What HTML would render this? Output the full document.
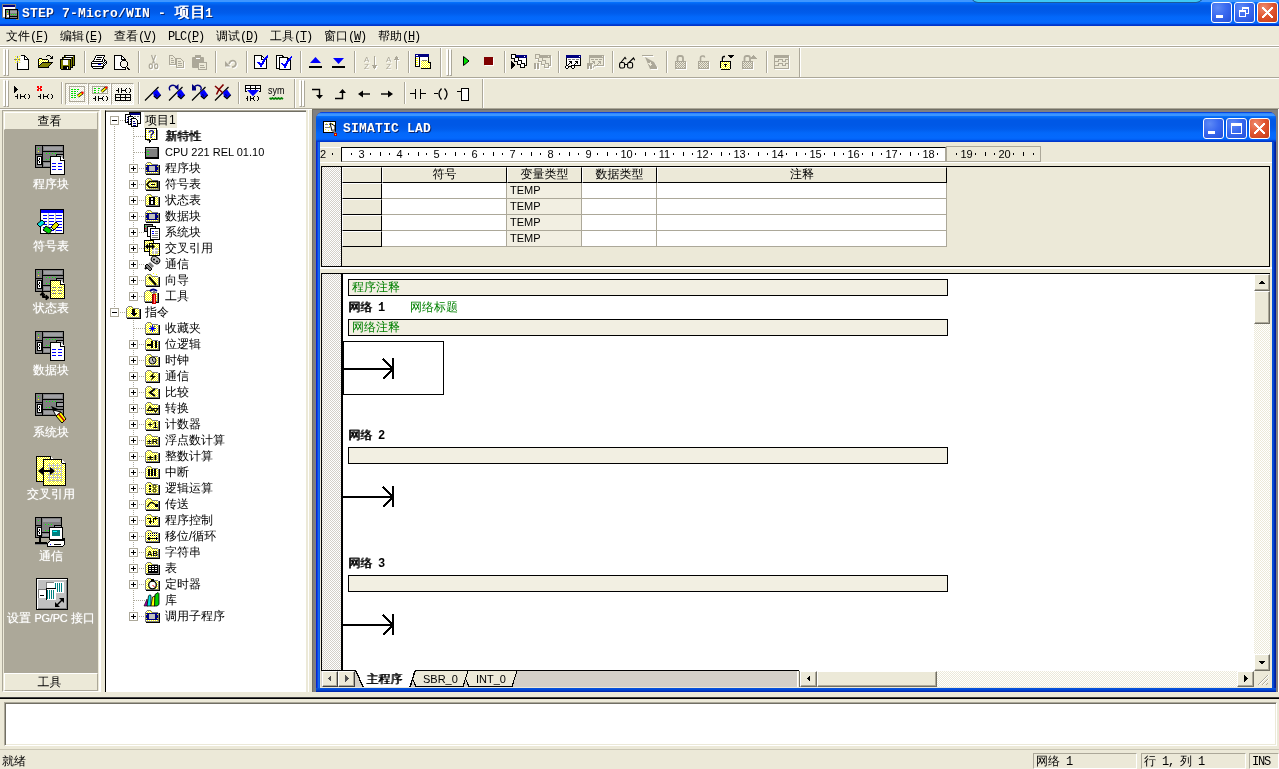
<!DOCTYPE html><html lang="zh-CN"><head><meta charset="utf-8"><title>STEP 7-Micro/WIN - 项目1</title><style>
*{box-sizing:border-box}
html,body{margin:0;padding:0}
body{width:1279px;height:769px;background:#ece9d8;position:relative;overflow:hidden;
 font:12px "Liberation Sans","WenQuanYi Zen Hei","Noto Sans CJK SC",sans-serif;color:#000;line-height:14px;will-change:transform}
.a{position:absolute}
.m{font-family:"Liberation Mono","WenQuanYi Zen Hei",monospace;font-size:12px;letter-spacing:-1.2px}
.c{font-family:"Liberation Sans","WenQuanYi Zen Hei","Noto Sans CJK SC",sans-serif;font-size:12px}
svg{position:absolute;overflow:visible}
.tb{background:linear-gradient(#3e96ff 0,#3e96ff 1.5px,#0470fc 2.5px,#0363ee 4px,#0058e6 6px,#0058e6 9px,#015ceb 13px,#0368fa 17px,#0469fd 22px,#0160f5 23.5px,#0040d5 24.5px,#002fc4 26px)}
.wb{position:absolute;width:21px;height:21px;border:1px solid #fff;border-radius:3px;
 background:radial-gradient(circle at 30% 25%,#5e8af5 0,#3a6af0 45%,#2450d8 100%)}
.wb.x{background:radial-gradient(circle at 30% 25%,#ee8d70 0,#e0542e 50%,#c23a14 100%)}
.grip{position:absolute;width:3px;border-left:1px solid #fff;border-top:1px solid #fff;border-right:1px solid #aca899;border-bottom:1px solid #aca899;background:#fff}
.sep{position:absolute;width:2px;border-left:1px solid #aca899;border-right:1px solid #fff}
.btn{position:absolute;background:#ece9d8;border:1px solid;border-color:#fff #716f64 #716f64 #fff;box-shadow:inset -1px -1px 0 #aca899}
.hatch{background-image:conic-gradient(#fff 25%,#ece9d8 0 50%,#fff 0 75%,#ece9d8 0);background-size:2px 2px}
.hatchg{background-image:conic-gradient(#fff 25%,#d4d0c8 0 50%,#fff 0 75%,#d4d0c8 0);background-size:2px 2px}
.navl{position:absolute;left:4px;width:94px;text-align:center;color:#fff;text-shadow:0 0 1px rgba(255,255,255,.7);font-size:12px;height:14px;line-height:14px;white-space:nowrap}
.tl{position:absolute;height:16px;line-height:16px;white-space:nowrap;font-size:12px}
.pm{position:absolute;width:9px;height:9px;border:1px solid #aca899;background:#fff}
.pm:before{content:"";position:absolute;left:1px;top:3px;width:5px;height:1px;background:#000}
.pm.p:after{content:"";position:absolute;left:3px;top:1px;width:1px;height:5px;background:#000}
.dh{position:absolute;height:1px;background-image:linear-gradient(90deg,#aca899 50%,transparent 0);background-size:2px 1px}
.dv{position:absolute;width:1px;background-image:linear-gradient(#aca899 50%,transparent 0);background-size:1px 2px}
.hc{position:absolute;height:16px;background:#ece9d8;border-right:1px solid #000;border-bottom:1px solid #000;border-left:1px solid #fff;border-top:1px solid #fff;text-align:center;line-height:13px;font-size:12px}
.gc{position:absolute;height:16px;border-right:1px solid #aca899;border-bottom:1px solid #aca899;background:#fff;font-size:11px;line-height:15px;padding-left:3px}
.cm{position:absolute;left:348px;width:600px;height:17px;border:1px solid #000;background:#f2efe2;color:#008000;font-size:12px;line-height:14px;padding-left:3px}
.nw{position:absolute;left:348px;text-shadow:1px 0 0 #000;font-size:12px;line-height:14px;white-space:nowrap}
.sb{position:absolute;background:#ece9d8;border:1px solid;border-color:#fff #716f64 #716f64 #fff;box-shadow:inset -1px -1px 0 #aca899}
.sp{position:absolute;top:753px;height:16px;border:1px solid;border-color:#aca899 #fff #fff #aca899;font-size:12px;line-height:14px;padding-left:2px;white-space:nowrap}
</style></head><body>
<div class="a tb" style="left:0;top:0;width:1279px;height:26px"></div>
<div class="a" style="left:971px;top:-4px;width:232px;height:7px;background:#3ec8f4;border:1px solid #1a5a9a;border-radius:0 0 8px 8px"></div>
<svg style="left:2px;top:4px" width="17" height="16" viewBox="0 0 17 16" shape-rendering="crispEdges" ><rect x="0" y="0" width="14" height="14" fill="#808080"/><rect x="1" y="1" width="12" height="2" fill="#000080"/><rect x="1" y="3" width="12" height="10" fill="#fff"/><rect x="3" y="5" width="13" height="10" fill="#000"/><rect x="4" y="6" width="11" height="8" fill="#808080"/><rect x="7" y="6" width="1" height="8" fill="#000"/><rect x="5" y="7" width="1" height="1" fill="#0f0"/><rect x="5" y="9" width="1" height="1" fill="#ff0"/><rect x="5" y="11" width="2" height="2" fill="#fff"/><rect x="8" y="7" width="7" height="2" fill="#a0a0a4"/><rect x="9" y="10" width="1" height="1" fill="#0f0"/><rect x="11" y="10" width="1" height="1" fill="#0f0"/><rect x="13" y="10" width="1" height="1" fill="#0f0"/><rect x="8" y="12" width="7" height="1" fill="#000"/><rect x="14" y="15" width="3" height="1" fill="#808080"/><rect x="16" y="7" width="1" height="9" fill="#808080"/></svg>
<div class="a" style="left:22px;top:6px;color:#fff;font:bold 13px 'Liberation Mono','WenQuanYi Zen Hei',monospace;letter-spacing:.2px;line-height:16px;white-space:nowrap;text-shadow:1px 1px 0 #0a246a">STEP 7-Micro/WIN -</div>
<div class="a" style="left:174px;top:4px;color:#fff;font:15px 'Liberation Sans','WenQuanYi Zen Hei',sans-serif;line-height:16px;letter-spacing:1px;white-space:nowrap;text-shadow:1px 0 0 #fff,2px 1px 0 #0a246a">项目</div>
<div class="a" style="left:205px;top:6px;color:#fff;font:bold 13px 'Liberation Mono','WenQuanYi Zen Hei',monospace;letter-spacing:.2px;line-height:16px;white-space:nowrap;text-shadow:1px 1px 0 #0a246a">1</div>
<div class="wb" style="left:1211px;top:2px"><svg style="left:4px;top:12px" width="7" height="3" viewBox="0 0 7 3" shape-rendering="crispEdges" ><rect x="0" y="0" width="7" height="3" fill="#fff"/></svg></div>
<div class="wb" style="left:1234px;top:2px"><svg style="left:4px;top:4px" width="12" height="11" viewBox="0 0 12 11" shape-rendering="crispEdges" ><path d="M3.5 3V.5h6v6H7" fill="none" stroke="#fff" stroke-width="1"/><rect x="3" y="0" width="7" height="2" fill="#fff"/><rect x=".5" y="3.5" width="6" height="6" fill="none" stroke="#fff"/><rect x="0" y="3" width="7" height="2" fill="#fff"/></svg></div>
<div class="wb x" style="left:1257px;top:2px"><svg style="left:4px;top:4px" width="11" height="11" viewBox="0 0 11 11" shape-rendering="crispEdges" shape-rendering="geometricPrecision"><path d="M1 1l9 9M10 1l-9 9" stroke="#fff" stroke-width="2.2" stroke-linecap="square"/></svg></div>
<div class="a" style="left:6px;top:29px;white-space:nowrap">文件<span class="m">(<u>F</u>)</span></div>
<div class="a" style="left:60px;top:29px;white-space:nowrap">编辑<span class="m">(<u>E</u>)</span></div>
<div class="a" style="left:114px;top:29px;white-space:nowrap">查看<span class="m">(<u>V</u>)</span></div>
<div class="a" style="left:168px;top:29px;white-space:nowrap"><span class="m">PLC(<u>P</u>)</span></div>
<div class="a" style="left:216px;top:29px;white-space:nowrap">调试<span class="m">(<u>D</u>)</span></div>
<div class="a" style="left:270px;top:29px;white-space:nowrap">工具<span class="m">(<u>T</u>)</span></div>
<div class="a" style="left:324px;top:29px;white-space:nowrap">窗口<span class="m">(<u>W</u>)</span></div>
<div class="a" style="left:378px;top:29px;white-space:nowrap">帮助<span class="m">(<u>H</u>)</span></div>
<div class="a" style="left:0;top:45px;width:1279px;height:3px;background:#fff;border-top:0"></div><div class="a" style="left:0;top:46px;width:1279px;height:1px;background:#aca899"></div>
<div class="a" style="left:0;top:77px;width:1279px;height:2px;border-top:1px solid #aca899;border-bottom:1px solid #fff"></div><div class="a" style="left:0;top:108px;width:1279px;height:2px;background:#fff;border-top:1px solid #aca899"></div><div class="grip" style="left:3px;top:49px;height:27px"></div><div class="grip" style="left:6px;top:49px;height:27px"></div><div class="grip" style="left:446px;top:49px;height:27px"></div><div class="grip" style="left:449px;top:49px;height:27px"></div><div class="sep" style="left:84px;top:51px;height:22px"></div><div class="sep" style="left:138px;top:51px;height:22px"></div><div class="sep" style="left:215px;top:51px;height:22px"></div><div class="sep" style="left:246px;top:51px;height:22px"></div><div class="sep" style="left:300px;top:51px;height:22px"></div><div class="sep" style="left:354px;top:51px;height:22px"></div><div class="sep" style="left:408px;top:51px;height:22px"></div><div class="sep" style="left:504px;top:51px;height:22px"></div><div class="sep" style="left:558px;top:51px;height:22px"></div><div class="sep" style="left:612px;top:51px;height:22px"></div><div class="sep" style="left:666px;top:51px;height:22px"></div><div class="sep" style="left:766px;top:51px;height:22px"></div><div class="sep" style="left:440px;top:48px;height:29px"></div><div class="sep" style="left:799px;top:48px;height:29px"></div><div class="grip" style="left:3px;top:80px;height:27px"></div><div class="grip" style="left:6px;top:80px;height:27px"></div><div class="grip" style="left:299px;top:80px;height:27px"></div><div class="grip" style="left:302px;top:80px;height:27px"></div><div class="sep" style="left:61px;top:82px;height:22px"></div><div class="sep" style="left:138px;top:82px;height:22px"></div><div class="sep" style="left:238px;top:82px;height:22px"></div><div class="sep" style="left:404px;top:82px;height:22px"></div><div class="sep" style="left:294px;top:79px;height:29px"></div><div class="sep" style="left:482px;top:79px;height:29px"></div><div class="a hatch" style="left:65px;top:83px;width:23px;height:22px;border:1px solid;border-color:#aca899 #fff #fff #aca899"></div><div class="a hatch" style="left:88px;top:83px;width:23px;height:22px;border:1px solid;border-color:#aca899 #fff #fff #aca899"></div><div class="a hatch" style="left:111px;top:83px;width:23px;height:22px;border:1px solid;border-color:#aca899 #fff #fff #aca899"></div><svg width="0" height="0" style="left:0;top:0"><defs><pattern id="ydot" width="2" height="2" patternUnits="userSpaceOnUse"><rect width="2" height="2" fill="#ffff00"/><rect width="1" height="1" fill="#fff"/><rect x="1" y="1" width="1" height="1" fill="#fff"/></pattern><pattern id="gdot" width="2" height="2" patternUnits="userSpaceOnUse"><rect width="2" height="2" fill="#aca899"/><rect width="1" height="1" fill="#ece9d8"/><rect x="1" y="1" width="1" height="1" fill="#ece9d8"/></pattern><pattern id="ydot2" width="2" height="2" patternUnits="userSpaceOnUse"><rect width="2" height="2" fill="#fff"/><rect width="1" height="1" fill="#ffff00"/></pattern><pattern id="hdot" width="2" height="2" patternUnits="userSpaceOnUse"><rect width="2" height="2" fill="#ece9d8"/><rect width="1" height="1" fill="#fff"/><rect x="1" y="1" width="1" height="1" fill="#fff"/></pattern></defs></svg><svg style="left:14px;top:55px" width="16" height="16" viewBox="0 0 16 16" shape-rendering="crispEdges" ><rect x="7" y="0" width="4" height="1" fill="#000"/><rect x="1" y="1" width="1" height="1" fill="#ffff00"/><rect x="3" y="1" width="1" height="1" fill="#808080"/><rect x="5" y="1" width="1" height="1" fill="#ffff00"/><rect x="7" y="1" width="3" height="1" fill="#fff"/><rect x="10" y="1" width="2" height="1" fill="#000"/><rect x="3" y="2" width="1" height="1" fill="#808080"/><rect x="6" y="2" width="4" height="1" fill="#fff"/><rect x="10" y="2" width="1" height="1" fill="#000"/><rect x="11" y="2" width="1" height="1" fill="#fff"/><rect x="12" y="2" width="1" height="1" fill="#000"/><rect x="1" y="3" width="1" height="1" fill="#ffff00"/><rect x="3" y="3" width="1" height="1" fill="#ffff00"/><rect x="5" y="3" width="1" height="1" fill="#ffff00"/><rect x="7" y="3" width="3" height="1" fill="#fff"/><rect x="10" y="3" width="1" height="1" fill="#000"/><rect x="11" y="3" width="2" height="1" fill="#fff"/><rect x="13" y="3" width="1" height="1" fill="#000"/><rect x="0" y="4" width="3" height="1" fill="#808080"/><rect x="3" y="4" width="1" height="1" fill="#ffff00"/><rect x="4" y="4" width="2" height="1" fill="#808080"/><rect x="6" y="4" width="4" height="1" fill="#fff"/><rect x="10" y="4" width="5" height="1" fill="#000"/><rect x="1" y="5" width="1" height="1" fill="#ffff00"/><rect x="3" y="5" width="1" height="1" fill="#ffff00"/><rect x="5" y="5" width="1" height="1" fill="#ffff00"/><rect x="7" y="5" width="7" height="1" fill="#fff"/><rect x="14" y="5" width="1" height="1" fill="#000"/><rect x="3" y="6" width="1" height="1" fill="#808080"/><rect x="6" y="6" width="8" height="1" fill="#fff"/><rect x="14" y="6" width="1" height="1" fill="#000"/><rect x="1" y="7" width="1" height="1" fill="#ffff00"/><rect x="3" y="7" width="1" height="1" fill="#808080"/><rect x="5" y="7" width="1" height="1" fill="#ffff00"/><rect x="7" y="7" width="7" height="1" fill="#fff"/><rect x="14" y="7" width="1" height="1" fill="#000"/><rect x="3" y="8" width="1" height="1" fill="#000"/><rect x="4" y="8" width="10" height="1" fill="#fff"/><rect x="14" y="8" width="1" height="1" fill="#000"/><rect x="3" y="9" width="1" height="1" fill="#000"/><rect x="4" y="9" width="10" height="1" fill="#fff"/><rect x="14" y="9" width="1" height="1" fill="#000"/><rect x="3" y="10" width="1" height="1" fill="#000"/><rect x="4" y="10" width="10" height="1" fill="#fff"/><rect x="14" y="10" width="1" height="1" fill="#000"/><rect x="3" y="11" width="1" height="1" fill="#000"/><rect x="4" y="11" width="10" height="1" fill="#fff"/><rect x="14" y="11" width="1" height="1" fill="#000"/><rect x="3" y="12" width="1" height="1" fill="#000"/><rect x="4" y="12" width="10" height="1" fill="#fff"/><rect x="14" y="12" width="1" height="1" fill="#000"/><rect x="3" y="13" width="1" height="1" fill="#000"/><rect x="4" y="13" width="10" height="1" fill="#fff"/><rect x="14" y="13" width="1" height="1" fill="#000"/><rect x="3" y="14" width="12" height="1" fill="#000"/></svg><svg style="left:37px;top:55px" width="16" height="16" viewBox="0 0 16 16" shape-rendering="crispEdges" ><rect x="10" y="0" width="3" height="1" fill="#000"/><rect x="9" y="1" width="1" height="1" fill="#000"/><rect x="13" y="1" width="1" height="1" fill="#000"/><rect x="15" y="1" width="1" height="1" fill="#000"/><rect x="14" y="2" width="2" height="1" fill="#000"/><rect x="2" y="3" width="3" height="1" fill="#000"/><rect x="13" y="3" width="3" height="1" fill="#000"/><rect x="1" y="4" width="1" height="1" fill="#000"/><rect x="2" y="4" width="1" height="1" fill="#ffff00"/><rect x="3" y="4" width="1" height="1" fill="#fff"/><rect x="4" y="4" width="1" height="1" fill="#ffff00"/><rect x="5" y="4" width="6" height="1" fill="#000"/><rect x="1" y="5" width="1" height="1" fill="#000"/><rect x="2" y="5" width="1" height="1" fill="#fff"/><rect x="3" y="5" width="1" height="1" fill="#ffff00"/><rect x="4" y="5" width="1" height="1" fill="#fff"/><rect x="5" y="5" width="1" height="1" fill="#ffff00"/><rect x="6" y="5" width="1" height="1" fill="#fff"/><rect x="7" y="5" width="1" height="1" fill="#ffff00"/><rect x="8" y="5" width="1" height="1" fill="#fff"/><rect x="9" y="5" width="1" height="1" fill="#ffff00"/><rect x="10" y="5" width="1" height="1" fill="#fff"/><rect x="11" y="5" width="1" height="1" fill="#000"/><rect x="1" y="6" width="1" height="1" fill="#000"/><rect x="2" y="6" width="1" height="1" fill="#ffff00"/><rect x="3" y="6" width="1" height="1" fill="#fff"/><rect x="4" y="6" width="1" height="1" fill="#ffff00"/><rect x="5" y="6" width="1" height="1" fill="#fff"/><rect x="6" y="6" width="1" height="1" fill="#ffff00"/><rect x="7" y="6" width="1" height="1" fill="#fff"/><rect x="8" y="6" width="1" height="1" fill="#ffff00"/><rect x="9" y="6" width="1" height="1" fill="#fff"/><rect x="10" y="6" width="1" height="1" fill="#ffff00"/><rect x="11" y="6" width="1" height="1" fill="#000"/><rect x="1" y="7" width="1" height="1" fill="#000"/><rect x="2" y="7" width="1" height="1" fill="#fff"/><rect x="3" y="7" width="1" height="1" fill="#ffff00"/><rect x="4" y="7" width="1" height="1" fill="#fff"/><rect x="5" y="7" width="11" height="1" fill="#000"/><rect x="1" y="8" width="1" height="1" fill="#000"/><rect x="2" y="8" width="1" height="1" fill="#ffff00"/><rect x="3" y="8" width="1" height="1" fill="#fff"/><rect x="4" y="8" width="1" height="1" fill="#000"/><rect x="5" y="8" width="9" height="1" fill="#808000"/><rect x="14" y="8" width="1" height="1" fill="#000"/><rect x="1" y="9" width="1" height="1" fill="#000"/><rect x="2" y="9" width="1" height="1" fill="#fff"/><rect x="3" y="9" width="1" height="1" fill="#000"/><rect x="4" y="9" width="9" height="1" fill="#808000"/><rect x="13" y="9" width="1" height="1" fill="#000"/><rect x="1" y="10" width="2" height="1" fill="#000"/><rect x="3" y="10" width="9" height="1" fill="#808000"/><rect x="12" y="10" width="1" height="1" fill="#000"/><rect x="1" y="11" width="1" height="1" fill="#000"/><rect x="2" y="11" width="9" height="1" fill="#808000"/><rect x="11" y="11" width="1" height="1" fill="#000"/><rect x="1" y="12" width="11" height="1" fill="#000"/></svg><svg style="left:60px;top:55px" width="16" height="16" viewBox="0 0 16 16" shape-rendering="crispEdges" ><rect x="4" y="0" width="11" height="1" fill="#000"/><rect x="4" y="1" width="1" height="1" fill="#000"/><rect x="5" y="1" width="1" height="1" fill="#808000"/><rect x="6" y="1" width="7" height="1" fill="#fff"/><rect x="13" y="1" width="1" height="1" fill="#808000"/><rect x="14" y="1" width="1" height="1" fill="#000"/><rect x="2" y="2" width="11" height="1" fill="#000"/><rect x="13" y="2" width="1" height="1" fill="#808000"/><rect x="14" y="2" width="1" height="1" fill="#000"/><rect x="2" y="3" width="1" height="1" fill="#000"/><rect x="3" y="3" width="1" height="1" fill="#808000"/><rect x="4" y="3" width="7" height="1" fill="#fff"/><rect x="11" y="3" width="1" height="1" fill="#808000"/><rect x="12" y="3" width="1" height="1" fill="#000"/><rect x="13" y="3" width="1" height="1" fill="#808000"/><rect x="14" y="3" width="1" height="1" fill="#000"/><rect x="0" y="4" width="11" height="1" fill="#000"/><rect x="11" y="4" width="1" height="1" fill="#808000"/><rect x="12" y="4" width="1" height="1" fill="#000"/><rect x="13" y="4" width="1" height="1" fill="#808000"/><rect x="14" y="4" width="1" height="1" fill="#000"/><rect x="0" y="5" width="1" height="1" fill="#000"/><rect x="1" y="5" width="2" height="1" fill="#808000"/><rect x="3" y="5" width="5" height="1" fill="#fff"/><rect x="8" y="5" width="2" height="1" fill="#808000"/><rect x="10" y="5" width="1" height="1" fill="#000"/><rect x="11" y="5" width="1" height="1" fill="#808000"/><rect x="12" y="5" width="1" height="1" fill="#000"/><rect x="13" y="5" width="1" height="1" fill="#808000"/><rect x="14" y="5" width="1" height="1" fill="#000"/><rect x="0" y="6" width="1" height="1" fill="#000"/><rect x="1" y="6" width="2" height="1" fill="#808000"/><rect x="3" y="6" width="5" height="1" fill="#fff"/><rect x="8" y="6" width="2" height="1" fill="#808000"/><rect x="10" y="6" width="1" height="1" fill="#000"/><rect x="11" y="6" width="1" height="1" fill="#808000"/><rect x="12" y="6" width="1" height="1" fill="#000"/><rect x="13" y="6" width="1" height="1" fill="#808000"/><rect x="14" y="6" width="1" height="1" fill="#000"/><rect x="0" y="7" width="1" height="1" fill="#000"/><rect x="1" y="7" width="2" height="1" fill="#808000"/><rect x="3" y="7" width="5" height="1" fill="#fff"/><rect x="8" y="7" width="2" height="1" fill="#808000"/><rect x="10" y="7" width="1" height="1" fill="#000"/><rect x="11" y="7" width="1" height="1" fill="#808000"/><rect x="12" y="7" width="1" height="1" fill="#000"/><rect x="13" y="7" width="1" height="1" fill="#808000"/><rect x="14" y="7" width="1" height="1" fill="#000"/><rect x="0" y="8" width="1" height="1" fill="#000"/><rect x="1" y="8" width="2" height="1" fill="#808000"/><rect x="3" y="8" width="5" height="1" fill="#fff"/><rect x="8" y="8" width="2" height="1" fill="#808000"/><rect x="10" y="8" width="1" height="1" fill="#000"/><rect x="11" y="8" width="1" height="1" fill="#808000"/><rect x="12" y="8" width="1" height="1" fill="#000"/><rect x="13" y="8" width="1" height="1" fill="#808000"/><rect x="14" y="8" width="1" height="1" fill="#000"/><rect x="0" y="9" width="1" height="1" fill="#000"/><rect x="1" y="9" width="2" height="1" fill="#808000"/><rect x="3" y="9" width="5" height="1" fill="#fff"/><rect x="8" y="9" width="2" height="1" fill="#808000"/><rect x="10" y="9" width="1" height="1" fill="#000"/><rect x="11" y="9" width="1" height="1" fill="#808000"/><rect x="12" y="9" width="1" height="1" fill="#000"/><rect x="13" y="9" width="1" height="1" fill="#808000"/><rect x="14" y="9" width="1" height="1" fill="#000"/><rect x="0" y="10" width="1" height="1" fill="#000"/><rect x="1" y="10" width="9" height="1" fill="#808000"/><rect x="10" y="10" width="1" height="1" fill="#000"/><rect x="11" y="10" width="1" height="1" fill="#808000"/><rect x="12" y="10" width="3" height="1" fill="#000"/><rect x="0" y="11" width="1" height="1" fill="#000"/><rect x="1" y="11" width="2" height="1" fill="#808000"/><rect x="3" y="11" width="6" height="1" fill="#000"/><rect x="9" y="11" width="1" height="1" fill="#808000"/><rect x="10" y="11" width="1" height="1" fill="#000"/><rect x="11" y="11" width="1" height="1" fill="#808000"/><rect x="12" y="11" width="1" height="1" fill="#000"/><rect x="0" y="12" width="1" height="1" fill="#000"/><rect x="1" y="12" width="2" height="1" fill="#808000"/><rect x="3" y="12" width="4" height="1" fill="#000"/><rect x="7" y="12" width="1" height="1" fill="#fff"/><rect x="8" y="12" width="1" height="1" fill="#000"/><rect x="9" y="12" width="1" height="1" fill="#808000"/><rect x="10" y="12" width="3" height="1" fill="#000"/><rect x="0" y="13" width="1" height="1" fill="#000"/><rect x="1" y="13" width="2" height="1" fill="#808000"/><rect x="3" y="13" width="4" height="1" fill="#000"/><rect x="7" y="13" width="1" height="1" fill="#fff"/><rect x="8" y="13" width="1" height="1" fill="#000"/><rect x="9" y="13" width="1" height="1" fill="#808000"/><rect x="10" y="13" width="1" height="1" fill="#000"/><rect x="1" y="14" width="10" height="1" fill="#000"/></svg><svg style="left:91px;top:55px" width="16" height="16" viewBox="0 0 16 16" shape-rendering="crispEdges" ><rect x="5" y="0" width="9" height="1" fill="#000"/><rect x="4" y="1" width="1" height="1" fill="#000"/><rect x="5" y="1" width="8" height="1" fill="#fff"/><rect x="13" y="1" width="1" height="1" fill="#000"/><rect x="4" y="2" width="1" height="1" fill="#000"/><rect x="5" y="2" width="1" height="1" fill="#fff"/><rect x="6" y="2" width="5" height="1" fill="#000"/><rect x="11" y="2" width="1" height="1" fill="#fff"/><rect x="12" y="2" width="1" height="1" fill="#000"/><rect x="3" y="3" width="1" height="1" fill="#000"/><rect x="4" y="3" width="8" height="1" fill="#fff"/><rect x="12" y="3" width="1" height="1" fill="#000"/><rect x="3" y="4" width="1" height="1" fill="#000"/><rect x="4" y="4" width="1" height="1" fill="#fff"/><rect x="5" y="4" width="5" height="1" fill="#000"/><rect x="10" y="4" width="1" height="1" fill="#fff"/><rect x="11" y="4" width="1" height="1" fill="#000"/><rect x="13" y="4" width="1" height="1" fill="#000"/><rect x="2" y="5" width="1" height="1" fill="#000"/><rect x="3" y="5" width="8" height="1" fill="#fff"/><rect x="11" y="5" width="1" height="1" fill="#000"/><rect x="12" y="5" width="1" height="1" fill="#fff"/><rect x="13" y="5" width="2" height="1" fill="#000"/><rect x="1" y="6" width="11" height="1" fill="#000"/><rect x="12" y="6" width="1" height="1" fill="#fff"/><rect x="13" y="6" width="1" height="1" fill="#000"/><rect x="14" y="6" width="1" height="1" fill="#fff"/><rect x="15" y="6" width="1" height="1" fill="#000"/><rect x="0" y="7" width="1" height="1" fill="#000"/><rect x="1" y="7" width="11" height="1" fill="#fff"/><rect x="12" y="7" width="1" height="1" fill="#000"/><rect x="13" y="7" width="1" height="1" fill="#fff"/><rect x="14" y="7" width="2" height="1" fill="#000"/><rect x="0" y="8" width="12" height="1" fill="#000"/><rect x="12" y="8" width="1" height="1" fill="#fff"/><rect x="13" y="8" width="1" height="1" fill="#000"/><rect x="14" y="8" width="1" height="1" fill="#fff"/><rect x="15" y="8" width="1" height="1" fill="#000"/><rect x="0" y="9" width="1" height="1" fill="#000"/><rect x="1" y="9" width="6" height="1" fill="#fff"/><rect x="7" y="9" width="3" height="1" fill="#0000ff"/><rect x="10" y="9" width="2" height="1" fill="#fff"/><rect x="12" y="9" width="1" height="1" fill="#000"/><rect x="13" y="9" width="1" height="1" fill="#fff"/><rect x="14" y="9" width="1" height="1" fill="#000"/><rect x="0" y="10" width="1" height="1" fill="#000"/><rect x="1" y="10" width="11" height="1" fill="#fff"/><rect x="12" y="10" width="2" height="1" fill="#000"/><rect x="0" y="11" width="13" height="1" fill="#000"/><rect x="1" y="12" width="1" height="1" fill="#000"/><rect x="2" y="12" width="9" height="1" fill="#fff"/><rect x="11" y="12" width="2" height="1" fill="#000"/><rect x="2" y="13" width="10" height="1" fill="#000"/></svg><svg style="left:114px;top:55px" width="16" height="16" viewBox="0 0 16 16" shape-rendering="crispEdges" ><rect x="0" y="0" width="8" height="1" fill="#000"/><rect x="0" y="1" width="1" height="1" fill="#000"/><rect x="1" y="1" width="6" height="1" fill="#fff"/><rect x="7" y="1" width="2" height="1" fill="#000"/><rect x="0" y="2" width="1" height="1" fill="#000"/><rect x="1" y="2" width="6" height="1" fill="#fff"/><rect x="7" y="2" width="1" height="1" fill="#000"/><rect x="8" y="2" width="1" height="1" fill="#fff"/><rect x="9" y="2" width="1" height="1" fill="#000"/><rect x="0" y="3" width="1" height="1" fill="#000"/><rect x="1" y="3" width="6" height="1" fill="#fff"/><rect x="7" y="3" width="1" height="1" fill="#000"/><rect x="8" y="3" width="2" height="1" fill="#fff"/><rect x="10" y="3" width="1" height="1" fill="#000"/><rect x="0" y="4" width="1" height="1" fill="#000"/><rect x="1" y="4" width="6" height="1" fill="#fff"/><rect x="7" y="4" width="5" height="1" fill="#000"/><rect x="0" y="5" width="1" height="1" fill="#000"/><rect x="1" y="5" width="7" height="1" fill="#fff"/><rect x="8" y="5" width="4" height="1" fill="#000"/><rect x="0" y="6" width="1" height="1" fill="#000"/><rect x="1" y="6" width="6" height="1" fill="#fff"/><rect x="7" y="6" width="1" height="1" fill="#000"/><rect x="8" y="6" width="4" height="1" fill="#f4f2e8"/><rect x="12" y="6" width="1" height="1" fill="#000"/><rect x="0" y="7" width="1" height="1" fill="#000"/><rect x="1" y="7" width="5" height="1" fill="#fff"/><rect x="6" y="7" width="1" height="1" fill="#000"/><rect x="7" y="7" width="6" height="1" fill="#f4f2e8"/><rect x="13" y="7" width="1" height="1" fill="#000"/><rect x="0" y="8" width="1" height="1" fill="#000"/><rect x="1" y="8" width="5" height="1" fill="#fff"/><rect x="6" y="8" width="1" height="1" fill="#000"/><rect x="7" y="8" width="6" height="1" fill="#f4f2e8"/><rect x="13" y="8" width="1" height="1" fill="#000"/><rect x="0" y="9" width="1" height="1" fill="#000"/><rect x="1" y="9" width="5" height="1" fill="#fff"/><rect x="6" y="9" width="1" height="1" fill="#000"/><rect x="7" y="9" width="6" height="1" fill="#f4f2e8"/><rect x="13" y="9" width="1" height="1" fill="#000"/><rect x="0" y="10" width="1" height="1" fill="#000"/><rect x="1" y="10" width="5" height="1" fill="#fff"/><rect x="6" y="10" width="1" height="1" fill="#000"/><rect x="7" y="10" width="6" height="1" fill="#f4f2e8"/><rect x="13" y="10" width="1" height="1" fill="#000"/><rect x="0" y="11" width="1" height="1" fill="#000"/><rect x="1" y="11" width="6" height="1" fill="#fff"/><rect x="7" y="11" width="1" height="1" fill="#000"/><rect x="8" y="11" width="4" height="1" fill="#f4f2e8"/><rect x="12" y="11" width="1" height="1" fill="#000"/><rect x="0" y="12" width="1" height="1" fill="#000"/><rect x="1" y="12" width="7" height="1" fill="#fff"/><rect x="8" y="12" width="4" height="1" fill="#000"/><rect x="13" y="12" width="1" height="1" fill="#000"/><rect x="0" y="13" width="1" height="1" fill="#000"/><rect x="1" y="13" width="10" height="1" fill="#fff"/><rect x="11" y="13" width="1" height="1" fill="#000"/><rect x="13" y="13" width="2" height="1" fill="#000"/><rect x="0" y="14" width="12" height="1" fill="#000"/><rect x="14" y="14" width="2" height="1" fill="#000"/></svg><svg style="left:145px;top:55px" width="16" height="16" viewBox="0 0 16 16" shape-rendering="crispEdges" ><g transform="translate(1,1)"><path d="M6.5 0L9.5 8.5M10.5 0L7.5 8.5" fill="none" stroke="#fff" stroke-width="1.2" shape-rendering="geometricPrecision"/><ellipse cx="5.8" cy="11.2" rx="1.6" ry="2.4" fill="none" stroke="#fff" stroke-width="1.2" shape-rendering="geometricPrecision"/><ellipse cx="11.2" cy="11.2" rx="1.6" ry="2.4" fill="none" stroke="#fff" stroke-width="1.2" shape-rendering="geometricPrecision"/></g><path d="M6.5 0L9.5 8.5M10.5 0L7.5 8.5" fill="none" stroke="#aca899" stroke-width="1.2" shape-rendering="geometricPrecision"/><ellipse cx="5.8" cy="11.2" rx="1.6" ry="2.4" fill="none" stroke="#aca899" stroke-width="1.2" shape-rendering="geometricPrecision"/><ellipse cx="11.2" cy="11.2" rx="1.6" ry="2.4" fill="none" stroke="#aca899" stroke-width="1.2" shape-rendering="geometricPrecision"/></svg><svg style="left:168px;top:55px" width="16" height="16" viewBox="0 0 16 16" shape-rendering="crispEdges" ><g transform="translate(1,1)"><path d="M1.5 0.5H4.5L7.5 3.5V9.5H1.5Z" fill="none" stroke="#fff" stroke-width="1" /><rect x="3" y="3" width="2" height="1" fill="#fff"/><rect x="3" y="5" width="3" height="1" fill="#fff"/><rect x="3" y="7" width="3" height="1" fill="#fff"/><path d="M8.5 3.5H12.5L15.5 6.5V12.5H8.5Z" fill="none" stroke="#fff" stroke-width="1" /><rect x="10" y="6" width="3" height="1" fill="#fff"/><rect x="10" y="8" width="4" height="1" fill="#fff"/><rect x="10" y="10" width="4" height="1" fill="#fff"/></g><path d="M1.5 0.5H4.5L7.5 3.5V9.5H1.5Z" fill="#ece9d8" stroke="#aca899" stroke-width="1" /><rect x="3" y="3" width="2" height="1" fill="#aca899"/><rect x="3" y="5" width="3" height="1" fill="#aca899"/><rect x="3" y="7" width="3" height="1" fill="#aca899"/><path d="M8.5 3.5H12.5L15.5 6.5V12.5H8.5Z" fill="#ece9d8" stroke="#aca899" stroke-width="1" /><rect x="10" y="6" width="3" height="1" fill="#aca899"/><rect x="10" y="8" width="4" height="1" fill="#aca899"/><rect x="10" y="10" width="4" height="1" fill="#aca899"/></svg><svg style="left:191px;top:55px" width="16" height="16" viewBox="0 0 16 16" shape-rendering="crispEdges" ><path d="M1 3Q1 2 2 2H12Q13 2 13 3V12Q13 13 12 13H2Q1 13 1 12Z" fill="#aca899" shape-rendering="geometricPrecision"/><rect x="4" y="0" width="6" height="3" fill="#aca899"/><rect x="5" y="3" width="4" height="1" fill="#fff"/><rect x="7" y="7" width="9" height="8" fill="#aca899"/><rect x="8" y="8" width="7" height="6" fill="#ece9d8"/><rect x="9" y="10" width="4" height="1" fill="#aca899"/><rect x="9" y="12" width="5" height="1" fill="#aca899"/></svg><svg style="left:222px;top:55px" width="16" height="16" viewBox="0 0 16 16" shape-rendering="crispEdges" ><g transform="translate(1,1)"><path d="M7 9Q8 5.5 11 5.5Q14 6 14 9Q13.5 12 10 12" fill="none" stroke="#fff" stroke-width="1.6" shape-rendering="geometricPrecision"/><path d="M3 6V11.5H8.5Z" fill="#fff" shape-rendering="geometricPrecision"/></g><path d="M7 9Q8 5.5 11 5.5Q14 6 14 9Q13.5 12 10 12" fill="none" stroke="#aca899" stroke-width="1.6" shape-rendering="geometricPrecision"/><path d="M3 6V11.5H8.5Z" fill="#aca899" shape-rendering="geometricPrecision"/></svg><svg style="left:254px;top:55px" width="16" height="16" viewBox="0 0 16 16" shape-rendering="crispEdges" ><rect x="0" y="0" width="8" height="1" fill="#000"/><rect x="13" y="0" width="1" height="1" fill="#0000ff"/><rect x="0" y="1" width="1" height="1" fill="#000"/><rect x="1" y="1" width="6" height="1" fill="#fff"/><rect x="7" y="1" width="2" height="1" fill="#000"/><rect x="12" y="1" width="2" height="1" fill="#0000ff"/><rect x="0" y="2" width="1" height="1" fill="#000"/><rect x="1" y="2" width="6" height="1" fill="#fff"/><rect x="7" y="2" width="1" height="1" fill="#000"/><rect x="8" y="2" width="1" height="1" fill="#fff"/><rect x="9" y="2" width="1" height="1" fill="#000"/><rect x="11" y="2" width="3" height="1" fill="#0000ff"/><rect x="0" y="3" width="1" height="1" fill="#000"/><rect x="1" y="3" width="6" height="1" fill="#fff"/><rect x="7" y="3" width="1" height="1" fill="#000"/><rect x="8" y="3" width="2" height="1" fill="#fff"/><rect x="10" y="3" width="3" height="1" fill="#0000ff"/><rect x="0" y="4" width="1" height="1" fill="#000"/><rect x="1" y="4" width="6" height="1" fill="#fff"/><rect x="7" y="4" width="2" height="1" fill="#000"/><rect x="9" y="4" width="3" height="1" fill="#0000ff"/><rect x="12" y="4" width="1" height="1" fill="#000"/><rect x="0" y="5" width="1" height="1" fill="#000"/><rect x="1" y="5" width="8" height="1" fill="#fff"/><rect x="9" y="5" width="2" height="1" fill="#0000ff"/><rect x="11" y="5" width="1" height="1" fill="#fff"/><rect x="12" y="5" width="1" height="1" fill="#000"/><rect x="0" y="6" width="1" height="1" fill="#000"/><rect x="1" y="6" width="7" height="1" fill="#fff"/><rect x="8" y="6" width="3" height="1" fill="#0000ff"/><rect x="11" y="6" width="1" height="1" fill="#fff"/><rect x="12" y="6" width="1" height="1" fill="#000"/><rect x="0" y="7" width="1" height="1" fill="#000"/><rect x="1" y="7" width="2" height="1" fill="#fff"/><rect x="3" y="7" width="3" height="1" fill="#0000ff"/><rect x="6" y="7" width="2" height="1" fill="#fff"/><rect x="8" y="7" width="2" height="1" fill="#0000ff"/><rect x="10" y="7" width="2" height="1" fill="#fff"/><rect x="12" y="7" width="1" height="1" fill="#000"/><rect x="0" y="8" width="1" height="1" fill="#000"/><rect x="1" y="8" width="3" height="1" fill="#fff"/><rect x="4" y="8" width="6" height="1" fill="#0000ff"/><rect x="10" y="8" width="2" height="1" fill="#fff"/><rect x="12" y="8" width="1" height="1" fill="#000"/><rect x="0" y="9" width="1" height="1" fill="#000"/><rect x="1" y="9" width="4" height="1" fill="#fff"/><rect x="5" y="9" width="4" height="1" fill="#0000ff"/><rect x="9" y="9" width="3" height="1" fill="#fff"/><rect x="12" y="9" width="1" height="1" fill="#000"/><rect x="0" y="10" width="1" height="1" fill="#000"/><rect x="1" y="10" width="5" height="1" fill="#fff"/><rect x="6" y="10" width="2" height="1" fill="#0000ff"/><rect x="8" y="10" width="4" height="1" fill="#fff"/><rect x="12" y="10" width="1" height="1" fill="#000"/><rect x="0" y="11" width="1" height="1" fill="#000"/><rect x="1" y="11" width="5" height="1" fill="#fff"/><rect x="6" y="11" width="2" height="1" fill="#0000ff"/><rect x="8" y="11" width="4" height="1" fill="#fff"/><rect x="12" y="11" width="1" height="1" fill="#000"/><rect x="0" y="12" width="1" height="1" fill="#000"/><rect x="1" y="12" width="11" height="1" fill="#fff"/><rect x="12" y="12" width="1" height="1" fill="#000"/><rect x="0" y="13" width="13" height="1" fill="#000"/></svg><svg style="left:276px;top:55px" width="16" height="16" viewBox="0 0 16 16" shape-rendering="crispEdges" ><rect x="0" y="0" width="7" height="1" fill="#000"/><rect x="0" y="1" width="1" height="1" fill="#000"/><rect x="1" y="1" width="5" height="1" fill="#fff"/><rect x="6" y="1" width="2" height="1" fill="#000"/><rect x="15" y="1" width="1" height="1" fill="#0000ff"/><rect x="0" y="2" width="1" height="1" fill="#000"/><rect x="1" y="2" width="2" height="1" fill="#fff"/><rect x="3" y="2" width="9" height="1" fill="#000"/><rect x="14" y="2" width="2" height="1" fill="#0000ff"/><rect x="0" y="3" width="1" height="1" fill="#000"/><rect x="1" y="3" width="2" height="1" fill="#fff"/><rect x="3" y="3" width="1" height="1" fill="#000"/><rect x="4" y="3" width="7" height="1" fill="#fff"/><rect x="11" y="3" width="2" height="1" fill="#000"/><rect x="13" y="3" width="2" height="1" fill="#0000ff"/><rect x="0" y="4" width="1" height="1" fill="#000"/><rect x="1" y="4" width="2" height="1" fill="#fff"/><rect x="3" y="4" width="1" height="1" fill="#000"/><rect x="4" y="4" width="7" height="1" fill="#fff"/><rect x="11" y="4" width="1" height="1" fill="#000"/><rect x="12" y="4" width="3" height="1" fill="#0000ff"/><rect x="0" y="5" width="1" height="1" fill="#000"/><rect x="1" y="5" width="2" height="1" fill="#fff"/><rect x="3" y="5" width="1" height="1" fill="#000"/><rect x="4" y="5" width="7" height="1" fill="#fff"/><rect x="11" y="5" width="3" height="1" fill="#0000ff"/><rect x="14" y="5" width="1" height="1" fill="#000"/><rect x="0" y="6" width="1" height="1" fill="#000"/><rect x="1" y="6" width="2" height="1" fill="#fff"/><rect x="3" y="6" width="1" height="1" fill="#000"/><rect x="4" y="6" width="6" height="1" fill="#fff"/><rect x="10" y="6" width="3" height="1" fill="#0000ff"/><rect x="13" y="6" width="1" height="1" fill="#fff"/><rect x="14" y="6" width="1" height="1" fill="#000"/><rect x="0" y="7" width="1" height="1" fill="#000"/><rect x="1" y="7" width="2" height="1" fill="#fff"/><rect x="3" y="7" width="1" height="1" fill="#000"/><rect x="4" y="7" width="6" height="1" fill="#fff"/><rect x="10" y="7" width="2" height="1" fill="#0000ff"/><rect x="12" y="7" width="2" height="1" fill="#fff"/><rect x="14" y="7" width="1" height="1" fill="#000"/><rect x="0" y="8" width="1" height="1" fill="#000"/><rect x="1" y="8" width="2" height="1" fill="#fff"/><rect x="3" y="8" width="1" height="1" fill="#000"/><rect x="4" y="8" width="1" height="1" fill="#fff"/><rect x="5" y="8" width="2" height="1" fill="#0000ff"/><rect x="7" y="8" width="2" height="1" fill="#fff"/><rect x="9" y="8" width="3" height="1" fill="#0000ff"/><rect x="12" y="8" width="2" height="1" fill="#fff"/><rect x="14" y="8" width="1" height="1" fill="#000"/><rect x="0" y="9" width="1" height="1" fill="#000"/><rect x="1" y="9" width="2" height="1" fill="#fff"/><rect x="3" y="9" width="1" height="1" fill="#000"/><rect x="4" y="9" width="2" height="1" fill="#fff"/><rect x="6" y="9" width="5" height="1" fill="#0000ff"/><rect x="11" y="9" width="3" height="1" fill="#fff"/><rect x="14" y="9" width="1" height="1" fill="#000"/><rect x="0" y="10" width="1" height="1" fill="#000"/><rect x="1" y="10" width="2" height="1" fill="#fff"/><rect x="3" y="10" width="1" height="1" fill="#000"/><rect x="4" y="10" width="3" height="1" fill="#fff"/><rect x="7" y="10" width="4" height="1" fill="#0000ff"/><rect x="11" y="10" width="3" height="1" fill="#fff"/><rect x="14" y="10" width="1" height="1" fill="#000"/><rect x="0" y="11" width="1" height="1" fill="#000"/><rect x="1" y="11" width="2" height="1" fill="#fff"/><rect x="3" y="11" width="1" height="1" fill="#000"/><rect x="4" y="11" width="4" height="1" fill="#fff"/><rect x="8" y="11" width="2" height="1" fill="#0000ff"/><rect x="10" y="11" width="4" height="1" fill="#fff"/><rect x="14" y="11" width="1" height="1" fill="#000"/><rect x="0" y="12" width="1" height="1" fill="#000"/><rect x="1" y="12" width="2" height="1" fill="#fff"/><rect x="3" y="12" width="1" height="1" fill="#000"/><rect x="4" y="12" width="4" height="1" fill="#fff"/><rect x="8" y="12" width="2" height="1" fill="#0000ff"/><rect x="10" y="12" width="4" height="1" fill="#fff"/><rect x="14" y="12" width="1" height="1" fill="#000"/><rect x="0" y="13" width="4" height="1" fill="#000"/><rect x="4" y="13" width="10" height="1" fill="#fff"/><rect x="14" y="13" width="1" height="1" fill="#000"/><rect x="3" y="14" width="12" height="1" fill="#000"/></svg><svg style="left:308px;top:55px" width="16" height="16" viewBox="0 0 16 16" shape-rendering="crispEdges" ><path d="M2 8L7.5 2L13 8Z" fill="#0000ff" shape-rendering="geometricPrecision"/><rect x="1" y="11" width="13" height="2" fill="#000"/></svg><svg style="left:331px;top:55px" width="16" height="16" viewBox="0 0 16 16" shape-rendering="crispEdges" ><path d="M2 3H13L7.5 9Z" fill="#0000ff" shape-rendering="geometricPrecision"/><rect x="1" y="11" width="13" height="2" fill="#000"/></svg><svg style="left:364px;top:55px" width="16" height="16" viewBox="0 0 16 16" shape-rendering="crispEdges" ><g transform="translate(1,1)"><text x="0" y="7" font-family="Liberation Sans,sans-serif" font-size="8" fill="#fff" shape-rendering="geometricPrecision">A</text><text x="0" y="14" font-family="Liberation Sans,sans-serif" font-size="8" fill="#fff">Z</text><rect x="10" y="1" width="1" height="12" fill="#fff"/><path d="M7.5 10L10.5 14L13.5 10Z" fill="#fff" /></g><text x="0" y="7" font-family="Liberation Sans,sans-serif" font-size="8" fill="#aca899" shape-rendering="geometricPrecision">A</text><text x="0" y="14" font-family="Liberation Sans,sans-serif" font-size="8" fill="#aca899">Z</text><rect x="10" y="1" width="1" height="12" fill="#aca899"/><path d="M7.5 10L10.5 14L13.5 10Z" fill="#aca899" /></svg><svg style="left:386px;top:55px" width="16" height="16" viewBox="0 0 16 16" shape-rendering="crispEdges" ><g transform="translate(1,1)"><text x="0" y="7" font-family="Liberation Sans,sans-serif" font-size="8" fill="#fff" shape-rendering="geometricPrecision">A</text><text x="0" y="14" font-family="Liberation Sans,sans-serif" font-size="8" fill="#fff">Z</text><rect x="10" y="2" width="1" height="12" fill="#fff"/><path d="M7.5 5L10.5 1L13.5 5Z" fill="#fff" /></g><text x="0" y="7" font-family="Liberation Sans,sans-serif" font-size="8" fill="#aca899" shape-rendering="geometricPrecision">A</text><text x="0" y="14" font-family="Liberation Sans,sans-serif" font-size="8" fill="#aca899">Z</text><rect x="10" y="2" width="1" height="12" fill="#aca899"/><path d="M7.5 5L10.5 1L13.5 5Z" fill="#aca899" /></svg><svg style="left:415px;top:55px" width="16" height="16" viewBox="0 0 16 16" shape-rendering="crispEdges" ><g transform="translate(0,-1)"><rect x="0" y="0" width="14" height="1" fill="#000080"/><rect x="0" y="1" width="1" height="1" fill="#000080"/><rect x="1" y="1" width="2" height="1" fill="#fff"/><rect x="3" y="1" width="11" height="1" fill="#000080"/><rect x="0" y="2" width="14" height="1" fill="#000080"/><rect x="0" y="3" width="1" height="1" fill="#000"/><rect x="1" y="3" width="3" height="1" fill="#fff"/><rect x="4" y="3" width="1" height="1" fill="#000"/><rect x="5" y="3" width="8" height="1" fill="#fff"/><rect x="13" y="3" width="1" height="1" fill="#000"/><rect x="0" y="4" width="1" height="1" fill="#000"/><rect x="1" y="4" width="2" height="1" fill="#ffff00"/><rect x="3" y="4" width="1" height="1" fill="#fff"/><rect x="4" y="4" width="1" height="1" fill="#000"/><rect x="5" y="4" width="8" height="1" fill="#fff"/><rect x="13" y="4" width="1" height="1" fill="#000"/><rect x="0" y="5" width="1" height="1" fill="#000"/><rect x="1" y="5" width="3" height="1" fill="#fff"/><rect x="4" y="5" width="1" height="1" fill="#000"/><rect x="5" y="5" width="8" height="1" fill="#fff"/><rect x="13" y="5" width="1" height="1" fill="#000"/><rect x="0" y="6" width="1" height="1" fill="#000"/><rect x="1" y="6" width="2" height="1" fill="#ffff00"/><rect x="3" y="6" width="1" height="1" fill="#fff"/><rect x="4" y="6" width="1" height="1" fill="#000"/><rect x="5" y="6" width="2" height="1" fill="#fff"/><rect x="7" y="6" width="5" height="1" fill="#808080"/><rect x="12" y="6" width="1" height="1" fill="#fff"/><rect x="13" y="6" width="1" height="1" fill="#000"/><rect x="0" y="7" width="1" height="1" fill="#000"/><rect x="1" y="7" width="3" height="1" fill="#fff"/><rect x="4" y="7" width="1" height="1" fill="#000"/><rect x="5" y="7" width="1" height="1" fill="#fff"/><rect x="6" y="7" width="1" height="1" fill="#ffff00"/><rect x="7" y="7" width="1" height="1" fill="#fff"/><rect x="8" y="7" width="1" height="1" fill="#ffff00"/><rect x="9" y="7" width="1" height="1" fill="#fff"/><rect x="10" y="7" width="1" height="1" fill="#ffff00"/><rect x="11" y="7" width="1" height="1" fill="#fff"/><rect x="12" y="7" width="1" height="1" fill="#ffff00"/><rect x="13" y="7" width="1" height="1" fill="#000"/><rect x="0" y="8" width="1" height="1" fill="#000"/><rect x="1" y="8" width="2" height="1" fill="#ffff00"/><rect x="3" y="8" width="1" height="1" fill="#fff"/><rect x="4" y="8" width="1" height="1" fill="#000"/><rect x="5" y="8" width="2" height="1" fill="#fff"/><rect x="7" y="8" width="1" height="1" fill="#ffff00"/><rect x="8" y="8" width="1" height="1" fill="#fff"/><rect x="9" y="8" width="1" height="1" fill="#ffff00"/><rect x="10" y="8" width="1" height="1" fill="#fff"/><rect x="11" y="8" width="1" height="1" fill="#ffff00"/><rect x="12" y="8" width="1" height="1" fill="#fff"/><rect x="13" y="8" width="3" height="1" fill="#000"/><rect x="0" y="9" width="1" height="1" fill="#000"/><rect x="1" y="9" width="3" height="1" fill="#fff"/><rect x="4" y="9" width="1" height="1" fill="#000"/><rect x="5" y="9" width="1" height="1" fill="#fff"/><rect x="6" y="9" width="1" height="1" fill="#ffff00"/><rect x="7" y="9" width="1" height="1" fill="#fff"/><rect x="8" y="9" width="1" height="1" fill="#ffff00"/><rect x="9" y="9" width="1" height="1" fill="#fff"/><rect x="10" y="9" width="1" height="1" fill="#ffff00"/><rect x="11" y="9" width="1" height="1" fill="#fff"/><rect x="12" y="9" width="1" height="1" fill="#ffff00"/><rect x="13" y="9" width="1" height="1" fill="#fff"/><rect x="14" y="9" width="1" height="1" fill="#ffff00"/><rect x="15" y="9" width="1" height="1" fill="#000"/><rect x="0" y="10" width="1" height="1" fill="#000"/><rect x="1" y="10" width="2" height="1" fill="#ffff00"/><rect x="3" y="10" width="1" height="1" fill="#fff"/><rect x="4" y="10" width="1" height="1" fill="#000"/><rect x="5" y="10" width="2" height="1" fill="#fff"/><rect x="7" y="10" width="1" height="1" fill="#ffff00"/><rect x="8" y="10" width="1" height="1" fill="#fff"/><rect x="9" y="10" width="1" height="1" fill="#ffff00"/><rect x="10" y="10" width="1" height="1" fill="#fff"/><rect x="11" y="10" width="1" height="1" fill="#ffff00"/><rect x="12" y="10" width="1" height="1" fill="#fff"/><rect x="13" y="10" width="1" height="1" fill="#ffff00"/><rect x="14" y="10" width="1" height="1" fill="#fff"/><rect x="15" y="10" width="1" height="1" fill="#000"/><rect x="0" y="11" width="1" height="1" fill="#000"/><rect x="1" y="11" width="3" height="1" fill="#fff"/><rect x="4" y="11" width="1" height="1" fill="#000"/><rect x="5" y="11" width="1" height="1" fill="#fff"/><rect x="6" y="11" width="1" height="1" fill="#ffff00"/><rect x="7" y="11" width="1" height="1" fill="#fff"/><rect x="8" y="11" width="1" height="1" fill="#ffff00"/><rect x="9" y="11" width="1" height="1" fill="#fff"/><rect x="10" y="11" width="1" height="1" fill="#ffff00"/><rect x="11" y="11" width="1" height="1" fill="#fff"/><rect x="12" y="11" width="1" height="1" fill="#ffff00"/><rect x="13" y="11" width="1" height="1" fill="#fff"/><rect x="14" y="11" width="1" height="1" fill="#ffff00"/><rect x="15" y="11" width="1" height="1" fill="#000"/><rect x="0" y="12" width="5" height="1" fill="#000"/><rect x="5" y="12" width="2" height="1" fill="#fff"/><rect x="7" y="12" width="1" height="1" fill="#ffff00"/><rect x="8" y="12" width="1" height="1" fill="#fff"/><rect x="9" y="12" width="1" height="1" fill="#ffff00"/><rect x="10" y="12" width="1" height="1" fill="#fff"/><rect x="11" y="12" width="1" height="1" fill="#ffff00"/><rect x="12" y="12" width="1" height="1" fill="#fff"/><rect x="13" y="12" width="1" height="1" fill="#ffff00"/><rect x="14" y="12" width="1" height="1" fill="#fff"/><rect x="15" y="12" width="1" height="1" fill="#000"/><rect x="6" y="13" width="1" height="1" fill="#ffff00"/><rect x="7" y="13" width="1" height="1" fill="#fff"/><rect x="8" y="13" width="1" height="1" fill="#ffff00"/><rect x="9" y="13" width="1" height="1" fill="#fff"/><rect x="10" y="13" width="1" height="1" fill="#ffff00"/><rect x="11" y="13" width="1" height="1" fill="#fff"/><rect x="12" y="13" width="1" height="1" fill="#ffff00"/><rect x="13" y="13" width="1" height="1" fill="#fff"/><rect x="14" y="13" width="1" height="1" fill="#ffff00"/><rect x="15" y="13" width="1" height="1" fill="#000"/><rect x="6" y="14" width="10" height="1" fill="#000"/></g></svg><svg style="left:459px;top:55px" width="16" height="16" viewBox="0 0 16 16" shape-rendering="crispEdges" ><path d="M4.5 1.5V10.5L10 6Z" fill="#00e000" stroke="#000" stroke-width="1" shape-rendering="geometricPrecision"/></svg><svg style="left:482px;top:55px" width="16" height="16" viewBox="0 0 16 16" shape-rendering="crispEdges" ><rect x="3" y="3" width="9" height="8" fill="#fff"/><rect x="2" y="2" width="9" height="8" fill="#800000"/></svg><svg style="left:511px;top:55px" width="16" height="16" viewBox="0 0 16 16" shape-rendering="crispEdges" ><g transform="translate(0,-1)"><rect x="0" y="0" width="5" height="1" fill="#000"/><rect x="0" y="1" width="1" height="1" fill="#000"/><rect x="1" y="1" width="3" height="1" fill="#fff"/><rect x="4" y="1" width="1" height="1" fill="#000"/><rect x="5" y="1" width="11" height="1" fill="#000080"/><rect x="0" y="2" width="1" height="1" fill="#000"/><rect x="1" y="2" width="3" height="1" fill="#fff"/><rect x="4" y="2" width="1" height="1" fill="#000"/><rect x="5" y="2" width="8" height="1" fill="#000080"/><rect x="13" y="2" width="1" height="1" fill="#fff"/><rect x="14" y="2" width="2" height="1" fill="#000080"/><rect x="0" y="3" width="1" height="1" fill="#000"/><rect x="1" y="3" width="3" height="1" fill="#fff"/><rect x="4" y="3" width="4" height="1" fill="#000"/><rect x="8" y="3" width="8" height="1" fill="#000080"/><rect x="0" y="4" width="4" height="1" fill="#000"/><rect x="4" y="4" width="3" height="1" fill="#fff"/><rect x="7" y="4" width="1" height="1" fill="#000"/><rect x="8" y="4" width="7" height="1" fill="#fff"/><rect x="15" y="4" width="1" height="1" fill="#000"/><rect x="3" y="5" width="1" height="1" fill="#000"/><rect x="4" y="5" width="3" height="1" fill="#fff"/><rect x="7" y="5" width="1" height="1" fill="#000"/><rect x="8" y="5" width="7" height="1" fill="#fff"/><rect x="15" y="5" width="1" height="1" fill="#000"/><rect x="3" y="6" width="1" height="1" fill="#000"/><rect x="4" y="6" width="3" height="1" fill="#fff"/><rect x="7" y="6" width="4" height="1" fill="#000"/><rect x="11" y="6" width="4" height="1" fill="#fff"/><rect x="15" y="6" width="1" height="1" fill="#000"/><rect x="3" y="7" width="4" height="1" fill="#000"/><rect x="7" y="7" width="3" height="1" fill="#fff"/><rect x="10" y="7" width="1" height="1" fill="#000"/><rect x="11" y="7" width="4" height="1" fill="#fff"/><rect x="15" y="7" width="1" height="1" fill="#000"/><rect x="6" y="8" width="1" height="1" fill="#000"/><rect x="7" y="8" width="3" height="1" fill="#fff"/><rect x="10" y="8" width="1" height="1" fill="#000"/><rect x="11" y="8" width="4" height="1" fill="#fff"/><rect x="15" y="8" width="1" height="1" fill="#000"/><rect x="6" y="9" width="1" height="1" fill="#000"/><rect x="7" y="9" width="3" height="1" fill="#fff"/><rect x="10" y="9" width="4" height="1" fill="#000"/><rect x="14" y="9" width="1" height="1" fill="#fff"/><rect x="15" y="9" width="1" height="1" fill="#000"/><rect x="6" y="10" width="4" height="1" fill="#000"/><rect x="10" y="10" width="3" height="1" fill="#fff"/><rect x="13" y="10" width="1" height="1" fill="#000"/><rect x="14" y="10" width="1" height="1" fill="#fff"/><rect x="15" y="10" width="1" height="1" fill="#000"/><rect x="9" y="11" width="1" height="1" fill="#000"/><rect x="10" y="11" width="3" height="1" fill="#fff"/><rect x="13" y="11" width="3" height="1" fill="#000"/><rect x="9" y="12" width="1" height="1" fill="#000"/><rect x="10" y="12" width="3" height="1" fill="#fff"/><rect x="13" y="12" width="1" height="1" fill="#000"/><rect x="9" y="13" width="5" height="1" fill="#000"/><rect x="0" y="7" width="1" height="1" fill="#000"/><rect x="0" y="8" width="2" height="1" fill="#000"/><rect x="0" y="9" width="3" height="1" fill="#000"/><rect x="0" y="10" width="4" height="1" fill="#000"/><rect x="0" y="11" width="4" height="1" fill="#000"/><rect x="0" y="12" width="3" height="1" fill="#000"/><rect x="0" y="13" width="2" height="1" fill="#000"/><rect x="0" y="14" width="1" height="1" fill="#000"/></g></svg><svg style="left:534px;top:55px" width="16" height="16" viewBox="0 0 16 16" shape-rendering="crispEdges" ><g transform="translate(1,1)"><g transform="translate(1,-1)"><rect x="0" y="0" width="5" height="1" fill="#fff"/><rect x="0" y="1" width="1" height="1" fill="#fff"/><rect x="1" y="1" width="3" height="1" fill="#fff"/><rect x="4" y="1" width="1" height="1" fill="#fff"/><rect x="5" y="1" width="11" height="1" fill="#fff"/><rect x="0" y="2" width="1" height="1" fill="#fff"/><rect x="1" y="2" width="3" height="1" fill="#fff"/><rect x="4" y="2" width="1" height="1" fill="#fff"/><rect x="5" y="2" width="8" height="1" fill="#fff"/><rect x="13" y="2" width="1" height="1" fill="#fff"/><rect x="14" y="2" width="2" height="1" fill="#fff"/><rect x="0" y="3" width="1" height="1" fill="#fff"/><rect x="1" y="3" width="3" height="1" fill="#fff"/><rect x="4" y="3" width="4" height="1" fill="#fff"/><rect x="8" y="3" width="8" height="1" fill="#fff"/><rect x="0" y="4" width="4" height="1" fill="#fff"/><rect x="4" y="4" width="3" height="1" fill="#fff"/><rect x="7" y="4" width="1" height="1" fill="#fff"/><rect x="8" y="4" width="7" height="1" fill="#fff"/><rect x="15" y="4" width="1" height="1" fill="#fff"/><rect x="3" y="5" width="1" height="1" fill="#fff"/><rect x="4" y="5" width="3" height="1" fill="#fff"/><rect x="7" y="5" width="1" height="1" fill="#fff"/><rect x="8" y="5" width="7" height="1" fill="#fff"/><rect x="15" y="5" width="1" height="1" fill="#fff"/><rect x="3" y="6" width="1" height="1" fill="#fff"/><rect x="4" y="6" width="3" height="1" fill="#fff"/><rect x="7" y="6" width="4" height="1" fill="#fff"/><rect x="11" y="6" width="4" height="1" fill="#fff"/><rect x="15" y="6" width="1" height="1" fill="#fff"/><rect x="3" y="7" width="4" height="1" fill="#fff"/><rect x="7" y="7" width="3" height="1" fill="#fff"/><rect x="10" y="7" width="1" height="1" fill="#fff"/><rect x="11" y="7" width="4" height="1" fill="#fff"/><rect x="15" y="7" width="1" height="1" fill="#fff"/><rect x="6" y="8" width="1" height="1" fill="#fff"/><rect x="7" y="8" width="3" height="1" fill="#fff"/><rect x="10" y="8" width="1" height="1" fill="#fff"/><rect x="11" y="8" width="4" height="1" fill="#fff"/><rect x="15" y="8" width="1" height="1" fill="#fff"/><rect x="6" y="9" width="1" height="1" fill="#fff"/><rect x="7" y="9" width="3" height="1" fill="#fff"/><rect x="10" y="9" width="4" height="1" fill="#fff"/><rect x="14" y="9" width="1" height="1" fill="#fff"/><rect x="15" y="9" width="1" height="1" fill="#fff"/><rect x="6" y="10" width="4" height="1" fill="#fff"/><rect x="10" y="10" width="3" height="1" fill="#fff"/><rect x="13" y="10" width="1" height="1" fill="#fff"/><rect x="14" y="10" width="1" height="1" fill="#fff"/><rect x="15" y="10" width="1" height="1" fill="#fff"/><rect x="9" y="11" width="1" height="1" fill="#fff"/><rect x="10" y="11" width="3" height="1" fill="#fff"/><rect x="13" y="11" width="3" height="1" fill="#fff"/><rect x="9" y="12" width="1" height="1" fill="#fff"/><rect x="10" y="12" width="3" height="1" fill="#fff"/><rect x="13" y="12" width="1" height="1" fill="#fff"/><rect x="9" y="13" width="5" height="1" fill="#fff"/><rect x="-1" y="9" width="2" height="6" fill="#fff"/><rect x="2" y="9" width="2" height="6" fill="#fff"/></g></g><g transform="translate(1,-1)"><rect x="0" y="0" width="5" height="1" fill="#aca899"/><rect x="0" y="1" width="1" height="1" fill="#aca899"/><rect x="1" y="1" width="3" height="1" fill="#ece9d8"/><rect x="4" y="1" width="1" height="1" fill="#aca899"/><rect x="5" y="1" width="11" height="1" fill="#aca899"/><rect x="0" y="2" width="1" height="1" fill="#aca899"/><rect x="1" y="2" width="3" height="1" fill="#ece9d8"/><rect x="4" y="2" width="1" height="1" fill="#aca899"/><rect x="5" y="2" width="8" height="1" fill="#aca899"/><rect x="13" y="2" width="1" height="1" fill="#ece9d8"/><rect x="14" y="2" width="2" height="1" fill="#aca899"/><rect x="0" y="3" width="1" height="1" fill="#aca899"/><rect x="1" y="3" width="3" height="1" fill="#ece9d8"/><rect x="4" y="3" width="4" height="1" fill="#aca899"/><rect x="8" y="3" width="8" height="1" fill="#aca899"/><rect x="0" y="4" width="4" height="1" fill="#aca899"/><rect x="4" y="4" width="3" height="1" fill="#ece9d8"/><rect x="7" y="4" width="1" height="1" fill="#aca899"/><rect x="8" y="4" width="7" height="1" fill="#ece9d8"/><rect x="15" y="4" width="1" height="1" fill="#aca899"/><rect x="3" y="5" width="1" height="1" fill="#aca899"/><rect x="4" y="5" width="3" height="1" fill="#ece9d8"/><rect x="7" y="5" width="1" height="1" fill="#aca899"/><rect x="8" y="5" width="7" height="1" fill="#ece9d8"/><rect x="15" y="5" width="1" height="1" fill="#aca899"/><rect x="3" y="6" width="1" height="1" fill="#aca899"/><rect x="4" y="6" width="3" height="1" fill="#ece9d8"/><rect x="7" y="6" width="4" height="1" fill="#aca899"/><rect x="11" y="6" width="4" height="1" fill="#ece9d8"/><rect x="15" y="6" width="1" height="1" fill="#aca899"/><rect x="3" y="7" width="4" height="1" fill="#aca899"/><rect x="7" y="7" width="3" height="1" fill="#ece9d8"/><rect x="10" y="7" width="1" height="1" fill="#aca899"/><rect x="11" y="7" width="4" height="1" fill="#ece9d8"/><rect x="15" y="7" width="1" height="1" fill="#aca899"/><rect x="6" y="8" width="1" height="1" fill="#aca899"/><rect x="7" y="8" width="3" height="1" fill="#ece9d8"/><rect x="10" y="8" width="1" height="1" fill="#aca899"/><rect x="11" y="8" width="4" height="1" fill="#ece9d8"/><rect x="15" y="8" width="1" height="1" fill="#aca899"/><rect x="6" y="9" width="1" height="1" fill="#aca899"/><rect x="7" y="9" width="3" height="1" fill="#ece9d8"/><rect x="10" y="9" width="4" height="1" fill="#aca899"/><rect x="14" y="9" width="1" height="1" fill="#ece9d8"/><rect x="15" y="9" width="1" height="1" fill="#aca899"/><rect x="6" y="10" width="4" height="1" fill="#aca899"/><rect x="10" y="10" width="3" height="1" fill="#ece9d8"/><rect x="13" y="10" width="1" height="1" fill="#aca899"/><rect x="14" y="10" width="1" height="1" fill="#ece9d8"/><rect x="15" y="10" width="1" height="1" fill="#aca899"/><rect x="9" y="11" width="1" height="1" fill="#aca899"/><rect x="10" y="11" width="3" height="1" fill="#ece9d8"/><rect x="13" y="11" width="3" height="1" fill="#aca899"/><rect x="9" y="12" width="1" height="1" fill="#aca899"/><rect x="10" y="12" width="3" height="1" fill="#ece9d8"/><rect x="13" y="12" width="1" height="1" fill="#aca899"/><rect x="9" y="13" width="5" height="1" fill="#aca899"/><rect x="-1" y="9" width="2" height="6" fill="#aca899"/><rect x="2" y="9" width="2" height="6" fill="#aca899"/></g></svg><svg style="left:565px;top:55px" width="16" height="16" viewBox="0 0 16 16" shape-rendering="crispEdges" ><rect x="1" y="0" width="15" height="1" fill="#000080"/><rect x="1" y="1" width="13" height="1" fill="#000080"/><rect x="14" y="1" width="1" height="1" fill="#fff"/><rect x="15" y="1" width="1" height="1" fill="#000080"/><rect x="1" y="2" width="15" height="1" fill="#000080"/><rect x="1" y="3" width="1" height="1" fill="#000"/><rect x="2" y="3" width="13" height="1" fill="#fff"/><rect x="15" y="3" width="1" height="1" fill="#000"/><rect x="1" y="4" width="1" height="1" fill="#000"/><rect x="2" y="4" width="1" height="1" fill="#fff"/><rect x="3" y="4" width="3" height="1" fill="#808080"/><rect x="6" y="4" width="1" height="1" fill="#fff"/><rect x="7" y="4" width="3" height="1" fill="#808080"/><rect x="10" y="4" width="1" height="1" fill="#fff"/><rect x="11" y="4" width="3" height="1" fill="#808080"/><rect x="14" y="4" width="1" height="1" fill="#fff"/><rect x="15" y="4" width="1" height="1" fill="#000"/><rect x="1" y="5" width="1" height="1" fill="#000"/><rect x="2" y="5" width="13" height="1" fill="#fff"/><rect x="15" y="5" width="1" height="1" fill="#000"/><rect x="1" y="6" width="1" height="1" fill="#000"/><rect x="2" y="6" width="2" height="1" fill="#fff"/><rect x="4" y="6" width="3" height="1" fill="#000"/><rect x="7" y="6" width="3" height="1" fill="#fff"/><rect x="10" y="6" width="3" height="1" fill="#000"/><rect x="13" y="6" width="2" height="1" fill="#fff"/><rect x="15" y="6" width="1" height="1" fill="#000"/><rect x="1" y="7" width="1" height="1" fill="#000"/><rect x="2" y="7" width="3" height="1" fill="#fff"/><rect x="5" y="7" width="2" height="1" fill="#000"/><rect x="7" y="7" width="4" height="1" fill="#fff"/><rect x="11" y="7" width="2" height="1" fill="#000"/><rect x="13" y="7" width="2" height="1" fill="#fff"/><rect x="15" y="7" width="1" height="1" fill="#000"/><rect x="1" y="8" width="1" height="1" fill="#000"/><rect x="2" y="8" width="2" height="1" fill="#fff"/><rect x="4" y="8" width="1" height="1" fill="#000"/><rect x="5" y="8" width="1" height="1" fill="#fff"/><rect x="6" y="8" width="1" height="1" fill="#000"/><rect x="7" y="8" width="3" height="1" fill="#fff"/><rect x="10" y="8" width="1" height="1" fill="#000"/><rect x="11" y="8" width="1" height="1" fill="#fff"/><rect x="12" y="8" width="1" height="1" fill="#000"/><rect x="13" y="8" width="2" height="1" fill="#fff"/><rect x="15" y="8" width="1" height="1" fill="#000"/><rect x="1" y="9" width="1" height="1" fill="#000"/><rect x="2" y="9" width="1" height="1" fill="#fff"/><rect x="3" y="9" width="1" height="1" fill="#000"/><rect x="4" y="9" width="5" height="1" fill="#fff"/><rect x="9" y="9" width="1" height="1" fill="#000"/><rect x="10" y="9" width="5" height="1" fill="#fff"/><rect x="15" y="9" width="1" height="1" fill="#000"/><rect x="1" y="10" width="2" height="1" fill="#000"/><rect x="6" y="10" width="10" height="1" fill="#000"/><rect x="0" y="11" width="1" height="1" fill="#000"/><rect x="1" y="11" width="2" height="1" fill="#fff"/><rect x="3" y="11" width="4" height="1" fill="#000"/><rect x="7" y="11" width="2" height="1" fill="#fff"/><rect x="9" y="11" width="1" height="1" fill="#000"/><rect x="0" y="12" width="1" height="1" fill="#000"/><rect x="1" y="12" width="2" height="1" fill="#fff"/><rect x="3" y="12" width="1" height="1" fill="#000"/><rect x="6" y="12" width="1" height="1" fill="#000"/><rect x="7" y="12" width="2" height="1" fill="#fff"/><rect x="9" y="12" width="1" height="1" fill="#000"/><rect x="1" y="13" width="2" height="1" fill="#000"/><rect x="7" y="13" width="2" height="1" fill="#000"/></svg><svg style="left:587px;top:55px" width="16" height="16" viewBox="0 0 16 16" shape-rendering="crispEdges" ><g transform="translate(1,1)"><g transform="translate(1,0)"><rect x="1" y="0" width="15" height="1" fill="#fff"/><rect x="1" y="1" width="13" height="1" fill="#fff"/><rect x="14" y="1" width="1" height="1" fill="#fff"/><rect x="15" y="1" width="1" height="1" fill="#fff"/><rect x="1" y="2" width="15" height="1" fill="#fff"/><rect x="1" y="3" width="1" height="1" fill="#fff"/><rect x="2" y="3" width="13" height="1" fill="#fff"/><rect x="15" y="3" width="1" height="1" fill="#fff"/><rect x="1" y="4" width="1" height="1" fill="#fff"/><rect x="2" y="4" width="1" height="1" fill="#fff"/><rect x="3" y="4" width="3" height="1" fill="#fff"/><rect x="6" y="4" width="1" height="1" fill="#fff"/><rect x="7" y="4" width="3" height="1" fill="#fff"/><rect x="10" y="4" width="1" height="1" fill="#fff"/><rect x="11" y="4" width="3" height="1" fill="#fff"/><rect x="14" y="4" width="1" height="1" fill="#fff"/><rect x="15" y="4" width="1" height="1" fill="#fff"/><rect x="1" y="5" width="1" height="1" fill="#fff"/><rect x="2" y="5" width="13" height="1" fill="#fff"/><rect x="15" y="5" width="1" height="1" fill="#fff"/><rect x="1" y="6" width="1" height="1" fill="#fff"/><rect x="2" y="6" width="2" height="1" fill="#fff"/><rect x="4" y="6" width="3" height="1" fill="#fff"/><rect x="7" y="6" width="3" height="1" fill="#fff"/><rect x="10" y="6" width="3" height="1" fill="#fff"/><rect x="13" y="6" width="2" height="1" fill="#fff"/><rect x="15" y="6" width="1" height="1" fill="#fff"/><rect x="1" y="7" width="1" height="1" fill="#fff"/><rect x="2" y="7" width="3" height="1" fill="#fff"/><rect x="5" y="7" width="2" height="1" fill="#fff"/><rect x="7" y="7" width="4" height="1" fill="#fff"/><rect x="11" y="7" width="2" height="1" fill="#fff"/><rect x="13" y="7" width="2" height="1" fill="#fff"/><rect x="15" y="7" width="1" height="1" fill="#fff"/><rect x="1" y="8" width="1" height="1" fill="#fff"/><rect x="2" y="8" width="2" height="1" fill="#fff"/><rect x="4" y="8" width="1" height="1" fill="#fff"/><rect x="5" y="8" width="1" height="1" fill="#fff"/><rect x="6" y="8" width="1" height="1" fill="#fff"/><rect x="7" y="8" width="3" height="1" fill="#fff"/><rect x="10" y="8" width="1" height="1" fill="#fff"/><rect x="11" y="8" width="1" height="1" fill="#fff"/><rect x="12" y="8" width="1" height="1" fill="#fff"/><rect x="13" y="8" width="2" height="1" fill="#fff"/><rect x="15" y="8" width="1" height="1" fill="#fff"/><rect x="1" y="9" width="1" height="1" fill="#fff"/><rect x="2" y="9" width="1" height="1" fill="#fff"/><rect x="3" y="9" width="1" height="1" fill="#fff"/><rect x="4" y="9" width="5" height="1" fill="#fff"/><rect x="9" y="9" width="1" height="1" fill="#fff"/><rect x="10" y="9" width="5" height="1" fill="#fff"/><rect x="15" y="9" width="1" height="1" fill="#fff"/><rect x="1" y="10" width="2" height="1" fill="#fff"/><rect x="6" y="10" width="10" height="1" fill="#fff"/><rect x="-1" y="8" width="2" height="6" fill="#fff"/><rect x="2" y="8" width="2" height="6" fill="#fff"/><path d="M5 13Q6 9 8 11" fill="none" stroke="#fff" stroke-width="1" shape-rendering="geometricPrecision"/></g></g><g transform="translate(1,0)"><rect x="1" y="0" width="15" height="1" fill="#aca899"/><rect x="1" y="1" width="13" height="1" fill="#aca899"/><rect x="14" y="1" width="1" height="1" fill="#ece9d8"/><rect x="15" y="1" width="1" height="1" fill="#aca899"/><rect x="1" y="2" width="15" height="1" fill="#aca899"/><rect x="1" y="3" width="1" height="1" fill="#aca899"/><rect x="2" y="3" width="13" height="1" fill="#ece9d8"/><rect x="15" y="3" width="1" height="1" fill="#aca899"/><rect x="1" y="4" width="1" height="1" fill="#aca899"/><rect x="2" y="4" width="1" height="1" fill="#ece9d8"/><rect x="3" y="4" width="3" height="1" fill="#aca899"/><rect x="6" y="4" width="1" height="1" fill="#ece9d8"/><rect x="7" y="4" width="3" height="1" fill="#aca899"/><rect x="10" y="4" width="1" height="1" fill="#ece9d8"/><rect x="11" y="4" width="3" height="1" fill="#aca899"/><rect x="14" y="4" width="1" height="1" fill="#ece9d8"/><rect x="15" y="4" width="1" height="1" fill="#aca899"/><rect x="1" y="5" width="1" height="1" fill="#aca899"/><rect x="2" y="5" width="13" height="1" fill="#ece9d8"/><rect x="15" y="5" width="1" height="1" fill="#aca899"/><rect x="1" y="6" width="1" height="1" fill="#aca899"/><rect x="2" y="6" width="2" height="1" fill="#ece9d8"/><rect x="4" y="6" width="3" height="1" fill="#aca899"/><rect x="7" y="6" width="3" height="1" fill="#ece9d8"/><rect x="10" y="6" width="3" height="1" fill="#aca899"/><rect x="13" y="6" width="2" height="1" fill="#ece9d8"/><rect x="15" y="6" width="1" height="1" fill="#aca899"/><rect x="1" y="7" width="1" height="1" fill="#aca899"/><rect x="2" y="7" width="3" height="1" fill="#ece9d8"/><rect x="5" y="7" width="2" height="1" fill="#aca899"/><rect x="7" y="7" width="4" height="1" fill="#ece9d8"/><rect x="11" y="7" width="2" height="1" fill="#aca899"/><rect x="13" y="7" width="2" height="1" fill="#ece9d8"/><rect x="15" y="7" width="1" height="1" fill="#aca899"/><rect x="1" y="8" width="1" height="1" fill="#aca899"/><rect x="2" y="8" width="2" height="1" fill="#ece9d8"/><rect x="4" y="8" width="1" height="1" fill="#aca899"/><rect x="5" y="8" width="1" height="1" fill="#ece9d8"/><rect x="6" y="8" width="1" height="1" fill="#aca899"/><rect x="7" y="8" width="3" height="1" fill="#ece9d8"/><rect x="10" y="8" width="1" height="1" fill="#aca899"/><rect x="11" y="8" width="1" height="1" fill="#ece9d8"/><rect x="12" y="8" width="1" height="1" fill="#aca899"/><rect x="13" y="8" width="2" height="1" fill="#ece9d8"/><rect x="15" y="8" width="1" height="1" fill="#aca899"/><rect x="1" y="9" width="1" height="1" fill="#aca899"/><rect x="2" y="9" width="1" height="1" fill="#ece9d8"/><rect x="3" y="9" width="1" height="1" fill="#aca899"/><rect x="4" y="9" width="5" height="1" fill="#ece9d8"/><rect x="9" y="9" width="1" height="1" fill="#aca899"/><rect x="10" y="9" width="5" height="1" fill="#ece9d8"/><rect x="15" y="9" width="1" height="1" fill="#aca899"/><rect x="1" y="10" width="2" height="1" fill="#aca899"/><rect x="6" y="10" width="10" height="1" fill="#aca899"/><rect x="-1" y="8" width="2" height="6" fill="#aca899"/><rect x="2" y="8" width="2" height="6" fill="#aca899"/><path d="M5 13Q6 9 8 11" fill="none" stroke="#aca899" stroke-width="1" shape-rendering="geometricPrecision"/></g></svg><svg style="left:619px;top:55px" width="16" height="16" viewBox="0 0 16 16" shape-rendering="crispEdges" ><g shape-rendering="geometricPrecision" fill="none" stroke="#000" stroke-width="1.1"><rect x=".6" y="7.5" width="5" height="5.5" rx="1.6" fill="#ece9d8"/><rect x="8.6" y="7.5" width="5" height="5.5" rx="1.6" fill="#ece9d8"/><path d="M5.6 9.5H8.6M1.5 8L6 2.5L7.2 4.2M9.5 8L14.5 3L15.7 5.2"/></g></svg><svg style="left:642px;top:55px" width="16" height="16" viewBox="0 0 16 16" shape-rendering="crispEdges" ><g transform="translate(1,1)"><path d="M0 1L1 0L2 1L3 0L4 1L5 0L6 1L7 0L8 1L9 0L10 1L11 0" fill="none" stroke="#fff" stroke-width="1" shape-rendering="geometricPrecision"/><path d="M3 2L12 7L15 12V14H8Z" fill="#fff" shape-rendering="geometricPrecision"/><path d="M6 8L9 7L10 10L8 11Z" fill="#ece9d8" /></g><path d="M0 1L1 0L2 1L3 0L4 1L5 0L6 1L7 0L8 1L9 0L10 1L11 0" fill="none" stroke="#aca899" stroke-width="1" shape-rendering="geometricPrecision"/><path d="M3 2L12 7L15 12V14H8Z" fill="#aca899" shape-rendering="geometricPrecision"/><path d="M6 8L9 7L10 10L8 11Z" fill="#ece9d8" /></svg><svg style="left:675px;top:55px" width="16" height="16" viewBox="0 0 16 16" shape-rendering="crispEdges" ><g transform="translate(1,1)"><rect x="0" y="6" width="11" height="8" fill="#fff"/></g><rect x="0" y="6" width="11" height="8" fill="#aca899"/><rect x="1" y="7" width="9" height="6" fill="url(#gdot)"/><path d="M2.5 6V3Q2.5 1 4.5 1H6Q8 1 8 3V6" fill="none" stroke="#aca899" stroke-width="1.8" shape-rendering="geometricPrecision"/></svg><svg style="left:698px;top:55px" width="16" height="16" viewBox="0 0 16 16" shape-rendering="crispEdges" ><g transform="translate(1,1)"><rect x="0" y="6" width="11" height="8" fill="#fff"/></g><rect x="0" y="6" width="11" height="8" fill="#aca899"/><rect x="1" y="7" width="9" height="6" fill="url(#gdot)"/><path d="M2.5 6V3Q2.5 1 4.5 1H5.5Q6.5 1 6.5 2.5" fill="none" stroke="#aca899" stroke-width="1.6" shape-rendering="geometricPrecision"/></svg><svg style="left:720px;top:55px" width="16" height="16" viewBox="0 0 16 16" shape-rendering="crispEdges" ><path d="M.5 7.5H9.5V13.5H1.5L.5 12.5Z" fill="#ffff00" stroke="#000" stroke-width="1" /><rect x="0" y="6" width="11" height="1" fill="#000"/><rect x="10" y="7" width="1" height="7" fill="#000"/><rect x="1" y="14" width="9" height="1" fill="#000"/><rect x="0" y="7" width="1" height="6" fill="#000"/><rect x="1" y="7" width="9" height="7" fill="url(#ydot)"/><rect x="4" y="9" width="3" height="1" fill="#000"/><rect x="5" y="9" width="1" height="3" fill="#000"/><path d="M2.5 6V3Q2.5 1.5 4 1.5H5" fill="none" stroke="#000" stroke-width="1.4" shape-rendering="geometricPrecision"/><path d="M3.5 6V3.5" fill="none" stroke="#fff" stroke-width="1" /><path d="M7 0H14L10.5 3.5Z" fill="#000" /></svg><svg style="left:742px;top:55px" width="16" height="16" viewBox="0 0 16 16" shape-rendering="crispEdges" ><g transform="translate(1,1)"><rect x="0" y="6" width="11" height="8" fill="#fff"/></g><rect x="0" y="6" width="11" height="8" fill="#aca899"/><rect x="1" y="7" width="9" height="6" fill="url(#gdot)"/><path d="M2.5 6V3Q2.5 1 4.5 1H6Q8 1 8 3V6" fill="none" stroke="#aca899" stroke-width="1.8" shape-rendering="geometricPrecision"/><path d="M8 4L11.5 0L15 4Z" fill="#aca899" /></svg><svg style="left:774px;top:55px" width="16" height="16" viewBox="0 0 16 16" shape-rendering="crispEdges" ><g transform="translate(1,1)"><rect x="0" y="0" width="15" height="14" fill="#fff"/></g><rect x="0" y="0" width="15" height="14" fill="#aca899"/><rect x="1" y="3" width="13" height="10" fill="#ece9d8"/><path d="M1 6.5H4.5V4.5H8.5V6.5H11.5V4.5H14M1 10.5H4.5V8.5H8.5V10.5H11.5V8.5H14" fill="none" stroke="#aca899" stroke-width="1" /></svg><svg style="left:14px;top:86px" width="16" height="16" viewBox="0 0 16 16" shape-rendering="crispEdges" ><rect x="0" y="0" width="1" height="7" fill="#000"/><rect x="1" y="1" width="1" height="5" fill="#000"/><rect x="2" y="2" width="1" height="3" fill="#000"/><rect x="3" y="3" width="1" height="1" fill="#000"/><rect x="1" y="10" width="2" height="1" fill="#000"/><rect x="3" y="8" width="1" height="5" fill="#000"/><rect x="6" y="8" width="1" height="5" fill="#000"/><rect x="7" y="10" width="3" height="1" fill="#000"/><rect x="10" y="9" width="1" height="3" fill="#000"/><rect x="11" y="8" width="1" height="1" fill="#000"/><rect x="11" y="12" width="1" height="1" fill="#000"/><rect x="14" y="8" width="1" height="1" fill="#000"/><rect x="14" y="12" width="1" height="1" fill="#000"/><rect x="15" y="9" width="1" height="3" fill="#000"/></svg><svg style="left:37px;top:86px" width="16" height="16" viewBox="0 0 16 16" shape-rendering="crispEdges" ><rect x="0" y="0" width="2" height="2" fill="#ff0000"/><rect x="3" y="0" width="2" height="2" fill="#ff0000"/><rect x="1" y="2" width="3" height="1" fill="#ff0000"/><rect x="0" y="3" width="2" height="2" fill="#ff0000"/><rect x="3" y="3" width="2" height="2" fill="#ff0000"/><rect x="1" y="10" width="2" height="1" fill="#000"/><rect x="3" y="8" width="1" height="5" fill="#000"/><rect x="6" y="8" width="1" height="5" fill="#000"/><rect x="7" y="10" width="3" height="1" fill="#000"/><rect x="10" y="9" width="1" height="3" fill="#000"/><rect x="11" y="8" width="1" height="1" fill="#000"/><rect x="11" y="12" width="1" height="1" fill="#000"/><rect x="14" y="8" width="1" height="1" fill="#000"/><rect x="14" y="12" width="1" height="1" fill="#000"/><rect x="15" y="9" width="1" height="3" fill="#000"/></svg><svg style="left:69px;top:86px" width="16" height="16" viewBox="0 0 16 16" shape-rendering="crispEdges" ><rect x="0" y="0" width="16" height="16" fill="#aca899"/><rect x="1" y="1" width="14" height="14" fill="url(#hdot)"/><rect x="2" y="3" width="2" height="1" fill="#00e000"/><rect x="5" y="3" width="2" height="1" fill="#00e000"/><rect x="2" y="5" width="2" height="1" fill="#00e000"/><rect x="5" y="5" width="2" height="1" fill="#00e000"/><rect x="2" y="7" width="2" height="1" fill="#00e000"/><rect x="5" y="7" width="2" height="1" fill="#00e000"/><rect x="2" y="9" width="2" height="1" fill="#00e000"/><rect x="5" y="9" width="2" height="1" fill="#00e000"/><rect x="2" y="11" width="2" height="1" fill="#00e000"/><rect x="5" y="11" width="2" height="1" fill="#00e000"/><rect x="8" y="3" width="2" height="1" fill="#00e000"/><rect x="8" y="5" width="1" height="1" fill="#00e000"/><line x1="8.8" y1="10.2" x2="13.5" y2="6.8" stroke="#000" stroke-width="3.2" shape-rendering="geometricPrecision"/><line x1="8.8" y1="10.2" x2="13.5" y2="6.8" stroke="#ffff00" stroke-width="1.8" shape-rendering="geometricPrecision"/><circle cx="13.5" cy="6.8" r="1.2" fill="#f00" shape-rendering="geometricPrecision"/></svg><svg style="left:92px;top:86px" width="16" height="16" viewBox="0 0 16 16" shape-rendering="crispEdges" ><rect x="0" y="0" width="16" height="8" fill="#aca899"/><rect x="1" y="1" width="14" height="6" fill="url(#hdot)"/><rect x="2" y="2" width="2" height="1" fill="#00e000"/><rect x="6" y="2" width="2" height="1" fill="#00e000"/><rect x="2" y="4" width="2" height="1" fill="#00e000"/><rect x="6" y="4" width="1" height="1" fill="#00e000"/><rect x="2" y="6" width="2" height="1" fill="#00e000"/><rect x="6" y="6" width="1" height="1" fill="#00e000"/><line x1="9.6" y1="5.6" x2="14.3" y2="1.6" stroke="#000" stroke-width="3.2" shape-rendering="geometricPrecision"/><line x1="9.6" y1="5.6" x2="14.3" y2="1.6" stroke="#ffff00" stroke-width="1.8" shape-rendering="geometricPrecision"/><circle cx="14.3" cy="1.6" r="1.2" fill="#f00" shape-rendering="geometricPrecision"/><rect x="1" y="12" width="2" height="1" fill="#000"/><rect x="3" y="10" width="1" height="5" fill="#000"/><rect x="6" y="10" width="1" height="5" fill="#000"/><rect x="7" y="12" width="3" height="1" fill="#000"/><rect x="10" y="11" width="1" height="3" fill="#000"/><rect x="11" y="10" width="1" height="1" fill="#000"/><rect x="11" y="14" width="1" height="1" fill="#000"/><rect x="14" y="10" width="1" height="1" fill="#000"/><rect x="14" y="14" width="1" height="1" fill="#000"/><rect x="15" y="11" width="1" height="3" fill="#000"/></svg><svg style="left:115px;top:86px" width="16" height="16" viewBox="0 0 16 16" shape-rendering="crispEdges" ><rect x="1" y="4" width="2" height="1" fill="#000"/><rect x="3" y="2" width="1" height="5" fill="#000"/><rect x="6" y="2" width="1" height="5" fill="#000"/><rect x="7" y="4" width="3" height="1" fill="#000"/><rect x="10" y="3" width="1" height="3" fill="#000"/><rect x="11" y="2" width="1" height="1" fill="#000"/><rect x="11" y="6" width="1" height="1" fill="#000"/><rect x="14" y="2" width="1" height="1" fill="#000"/><rect x="14" y="6" width="1" height="1" fill="#000"/><rect x="15" y="3" width="1" height="3" fill="#000"/><rect x="0" y="8" width="16" height="1" fill="#000"/><rect x="0" y="11" width="16" height="1" fill="#000"/><rect x="0" y="14" width="16" height="1" fill="#000"/><rect x="0" y="8" width="1" height="7" fill="#000"/><rect x="5" y="8" width="1" height="7" fill="#000"/><rect x="10" y="8" width="1" height="7" fill="#000"/><rect x="15" y="8" width="1" height="7" fill="#000"/></svg><svg style="left:145px;top:86px" width="16" height="16" viewBox="0 0 16 16" shape-rendering="crispEdges" ><g transform="translate(0,0)"><path d="M0 14.5L13.5 1" fill="none" stroke="#000" stroke-width="1.3" shape-rendering="geometricPrecision"/><path d="M8 6.5L12 3.6L15.8 8.8L12 12.6L8.8 10Z" fill="#0000ff" shape-rendering="geometricPrecision"/><path d="M8.8 10L12 12.6L15.8 8.8" fill="none" stroke="#000" stroke-width="1.2" shape-rendering="geometricPrecision"/><path d="M10.3 8L12 10.4" fill="none" stroke="#000080" stroke-width="1.2" shape-rendering="geometricPrecision"/></g></svg><svg style="left:168px;top:86px" width="16" height="16" viewBox="0 0 16 16" shape-rendering="crispEdges" ><g transform="translate(1,0)"><path d="M0 14.5L13.5 1" fill="none" stroke="#000" stroke-width="1.3" shape-rendering="geometricPrecision"/><path d="M8 6.5L12 3.6L15.8 8.8L12 12.6L8.8 10Z" fill="#0000ff" shape-rendering="geometricPrecision"/><path d="M8.8 10L12 12.6L15.8 8.8" fill="none" stroke="#000" stroke-width="1.2" shape-rendering="geometricPrecision"/><path d="M10.3 8L12 10.4" fill="none" stroke="#000080" stroke-width="1.2" shape-rendering="geometricPrecision"/></g><path d="M2 4.5Q0 1 3.5 -.5Q7 -1.5 8.5 1.5" fill="none" stroke="#000080" stroke-width="1.4" shape-rendering="geometricPrecision"/><path d="M6.5 1.5H10.5V-2Z M7 1.5L10.5 4.5V1.5Z" fill="#000080" shape-rendering="geometricPrecision"/></svg><svg style="left:191px;top:86px" width="16" height="16" viewBox="0 0 16 16" shape-rendering="crispEdges" ><g transform="translate(1,0)"><path d="M0 14.5L13.5 1" fill="none" stroke="#000" stroke-width="1.3" shape-rendering="geometricPrecision"/><path d="M8 6.5L12 3.6L15.8 8.8L12 12.6L8.8 10Z" fill="#0000ff" shape-rendering="geometricPrecision"/><path d="M8.8 10L12 12.6L15.8 8.8" fill="none" stroke="#000" stroke-width="1.2" shape-rendering="geometricPrecision"/><path d="M10.3 8L12 10.4" fill="none" stroke="#000080" stroke-width="1.2" shape-rendering="geometricPrecision"/></g><path d="M9.5 4.5Q11.5 1 8 -.5Q4.5 -1.5 3 1.5" fill="none" stroke="#000080" stroke-width="1.4" shape-rendering="geometricPrecision"/><path d="M1 -2V4.5H5V1.5Z" fill="#000080" shape-rendering="geometricPrecision"/></svg><svg style="left:214px;top:86px" width="16" height="16" viewBox="0 0 16 16" shape-rendering="crispEdges" ><g transform="translate(1,0)"><path d="M0 14.5L13.5 1" fill="none" stroke="#000" stroke-width="1.3" shape-rendering="geometricPrecision"/><path d="M8 6.5L12 3.6L15.8 8.8L12 12.6L8.8 10Z" fill="#0000ff" shape-rendering="geometricPrecision"/><path d="M8.8 10L12 12.6L15.8 8.8" fill="none" stroke="#000" stroke-width="1.2" shape-rendering="geometricPrecision"/><path d="M10.3 8L12 10.4" fill="none" stroke="#000080" stroke-width="1.2" shape-rendering="geometricPrecision"/></g><path d="M1 0L9 7M9.5 -1.5L5 3.5L2.5 8.5" fill="none" stroke="#800000" stroke-width="1.6" shape-rendering="geometricPrecision"/></svg><svg style="left:245px;top:86px" width="16" height="16" viewBox="0 0 16 16" shape-rendering="crispEdges" ><rect x="0" y="-1" width="16" height="1" fill="#000"/><rect x="0" y="2" width="16" height="1" fill="#000"/><rect x="0" y="5" width="2" height="1" fill="#000"/><rect x="14" y="5" width="2" height="1" fill="#000"/><rect x="0" y="-1" width="1" height="7" fill="#000"/><rect x="5" y="-1" width="1" height="5" fill="#000"/><rect x="10" y="-1" width="1" height="5" fill="#000"/><rect x="15" y="-1" width="1" height="7" fill="#000"/><rect x="1" y="0" width="4" height="2" fill="#fff"/><rect x="6" y="0" width="4" height="2" fill="#fff"/><rect x="11" y="0" width="4" height="2" fill="#fff"/><rect x="1" y="3" width="4" height="2" fill="#fff"/><rect x="6" y="3" width="4" height="2" fill="#fff"/><rect x="11" y="3" width="4" height="2" fill="#fff"/><path d="M2 4H14L8 10.2Z" fill="#0000ff" shape-rendering="geometricPrecision"/><rect x="1" y="12" width="1" height="1" fill="#000"/><rect x="2" y="10" width="1" height="5" fill="#000"/><rect x="5" y="10" width="1" height="5" fill="#000"/><rect x="6" y="12" width="2" height="1" fill="#000"/><rect x="8" y="11" width="1" height="3" fill="#000"/><rect x="9" y="10" width="1" height="1" fill="#000"/><rect x="9" y="14" width="1" height="1" fill="#000"/><rect x="12" y="10" width="1" height="1" fill="#000"/><rect x="12" y="14" width="1" height="1" fill="#000"/><rect x="13" y="11" width="1" height="3" fill="#000"/></svg><svg style="left:268px;top:86px" width="16" height="16" viewBox="0 0 16 16" shape-rendering="crispEdges" ><text x="0" y="8" font-family="Liberation Sans,sans-serif" font-size="11.5" fill="#000" textLength="16.5" lengthAdjust="spacingAndGlyphs" shape-rendering="geometricPrecision">sym</text><path d="M1.5 12L3 13L4.5 12L6 13L7.5 12L9 13L10.5 12L12 13L13.5 12L15 13" fill="none" stroke="#008000" stroke-width="1.8" shape-rendering="geometricPrecision"/></svg><svg style="left:310px;top:86px" width="16" height="16" viewBox="0 0 16 16" shape-rendering="crispEdges" ><path d="M2 3.5H9.5V10" fill="none" stroke="#000" stroke-width="1.4" shape-rendering="geometricPrecision"/><path d="M6 9H13L9.5 13Z" fill="#000" shape-rendering="geometricPrecision"/></svg><svg style="left:333px;top:86px" width="16" height="16" viewBox="0 0 16 16" shape-rendering="crispEdges" ><path d="M2 12.5H9.5V6" fill="none" stroke="#000" stroke-width="1.4" shape-rendering="geometricPrecision"/><path d="M6 7H13L9.5 3Z" fill="#000" shape-rendering="geometricPrecision"/></svg><svg style="left:356px;top:86px" width="16" height="16" viewBox="0 0 16 16" shape-rendering="crispEdges" ><path d="M5 8H14" fill="none" stroke="#000" stroke-width="1.4" shape-rendering="geometricPrecision"/><path d="M2 8L7 4.5V11.5Z" fill="#000" shape-rendering="geometricPrecision"/></svg><svg style="left:379px;top:86px" width="16" height="16" viewBox="0 0 16 16" shape-rendering="crispEdges" ><path d="M2 8H11" fill="none" stroke="#000" stroke-width="1.4" shape-rendering="geometricPrecision"/><path d="M14 8L9 4.5V11.5Z" fill="#000" shape-rendering="geometricPrecision"/></svg><svg style="left:410px;top:86px" width="16" height="16" viewBox="0 0 16 16" shape-rendering="crispEdges" ><rect x="0" y="7" width="6" height="1" fill="#000"/><rect x="5" y="3" width="1" height="10" fill="#000"/><rect x="10" y="3" width="1" height="10" fill="#000"/><rect x="10" y="7" width="6" height="1" fill="#000"/></svg><svg style="left:433px;top:86px" width="16" height="16" viewBox="0 0 16 16" shape-rendering="crispEdges" ><rect x="1" y="7" width="4" height="1" fill="#000"/><path d="M8.5 2.5Q3.5 8 8.5 13.5M11.5 2.5Q16.5 8 11.5 13.5" fill="none" stroke="#000" stroke-width="1.3" shape-rendering="geometricPrecision"/></svg><svg style="left:456px;top:86px" width="16" height="16" viewBox="0 0 16 16" shape-rendering="crispEdges" ><rect x="1" y="5" width="4" height="1" fill="#000"/><path d="M5.5 2.5H12.5V14.5H5.5Z" fill="#fff" stroke="#000" stroke-width="1.4" /></svg>
<div class="a" style="left:2px;top:110px;width:98px;height:582px;border:1px solid;border-color:#aca899 #fff #fff #aca899;background:#ece9d8"></div><div class="a" style="left:4px;top:112px;width:94px;height:578px;background:#aca899"></div><div class="btn a" style="left:4px;top:112px;width:94px;height:18px;text-align:center;line-height:17px;padding-right:3px;border-color:#fff #aca899 #aca899 #fff;box-shadow:none">查看</div><div class="btn a" style="left:4px;top:673px;width:94px;height:18px;text-align:center;line-height:17px;padding-right:3px;border-color:#fff #aca899 #aca899 #fff;box-shadow:none">工具</div><div class="navl" style="top:177px">程序块</div><svg style="left:34px;top:144px" width="34" height="34" viewBox="0 0 34 34" shape-rendering="crispEdges" ><g transform="translate(1,1)"><rect x="0" y="0" width="29" height="23" fill="#000"/><rect x="1" y="1" width="27" height="21" fill="#808080"/><rect x="7" y="1" width="1" height="21" fill="#000"/><rect x="9" y="2" width="18" height="3" fill="#a0a0a4"/><rect x="8" y="6" width="20" height="1" fill="#000"/><rect x="8" y="16" width="20" height="1" fill="#000"/><rect x="9" y="18" width="18" height="3" fill="#a0a0a4"/><rect x="3" y="3" width="1" height="1" fill="#0f0"/><rect x="3" y="6" width="1" height="1" fill="#ffff00"/><rect x="11" y="7.5" width="1" height="1" fill="#0f0"/><rect x="14" y="7.5" width="1" height="1" fill="#0f0"/><rect x="17" y="7.5" width="1" height="1" fill="#0f0"/><rect x="20" y="7.5" width="1" height="1" fill="#0f0"/><rect x="11" y="14" width="1" height="1" fill="#0f0"/><rect x="14" y="14" width="1" height="1" fill="#0f0"/><rect x="1" y="9" width="6" height="1" fill="#000"/><rect x="2" y="11" width="5" height="9" fill="#000"/><rect x="3" y="12" width="3" height="7" fill="#fff"/><rect x="4" y="13" width="1" height="2" fill="#000"/><rect x="4" y="16" width="1" height="2" fill="#000"/><rect x="3" y="15" width="1" height="1" fill="#000"/><rect x="21" y="9" width="7" height="1" fill="#000"/><rect x="21" y="9" width="1" height="5" fill="#000"/><rect x="22" y="10" width="6" height="4" fill="#a0a0a4"/><rect x="21" y="13" width="7" height="1" fill="#000"/></g><path d="M16.5 12.5H26.5L30.5 16.5V30.5H16.5Z" fill="#fff" stroke="#000" stroke-width="1" /><path d="M26.5 12.5V16.5H30.5" fill="#fff" stroke="#000" stroke-width="1" /><rect x="18" y="19" width="4" height="1" fill="#0000ff"/><rect x="24" y="19" width="4" height="1" fill="#0000ff"/><rect x="18" y="22" width="4" height="1" fill="#0000ff"/><rect x="24" y="22" width="4" height="1" fill="#0000ff"/><rect x="18" y="25" width="4" height="1" fill="#0000ff"/><rect x="24" y="25" width="4" height="1" fill="#0000ff"/></svg><div class="navl" style="top:239px">符号表</div><svg style="left:34px;top:206px" width="34" height="34" viewBox="0 0 34 34" shape-rendering="crispEdges" ><rect x="6" y="3" width="24" height="25" fill="#000"/><rect x="7" y="4" width="22" height="3" fill="#0000ff"/><rect x="7" y="7" width="22" height="20" fill="#fff"/><rect x="9" y="9" width="4" height="1" fill="#0000ff"/><rect x="15" y="9" width="5" height="1" fill="#0000ff"/><rect x="22" y="9" width="6" height="1" fill="#0000ff"/><rect x="9" y="12" width="4" height="1" fill="#0000ff"/><rect x="15" y="12" width="5" height="1" fill="#0000ff"/><rect x="22" y="12" width="6" height="1" fill="#0000ff"/><rect x="9" y="15" width="4" height="1" fill="#0000ff"/><rect x="15" y="15" width="5" height="1" fill="#0000ff"/><rect x="22" y="15" width="6" height="1" fill="#0000ff"/><rect x="9" y="18" width="4" height="1" fill="#0000ff"/><rect x="15" y="18" width="5" height="1" fill="#0000ff"/><rect x="22" y="18" width="6" height="1" fill="#0000ff"/><rect x="9" y="21" width="4" height="1" fill="#0000ff"/><rect x="15" y="21" width="5" height="1" fill="#0000ff"/><rect x="22" y="21" width="6" height="1" fill="#0000ff"/><rect x="9" y="24" width="4" height="1" fill="#0000ff"/><rect x="15" y="24" width="5" height="1" fill="#0000ff"/><rect x="22" y="24" width="6" height="1" fill="#0000ff"/><rect x="14" y="7" width="1" height="20" fill="#c0c0c0"/><rect x="21" y="7" width="1" height="20" fill="#c0c0c0"/><path d="M3 18L8 14L11 17L6 21Z" fill="#00e0e0" stroke="#000" stroke-width="1" shape-rendering="geometricPrecision"/><path d="M9 24L12 20L18 24L15 28Z" fill="#00d000" stroke="#000" stroke-width="1" shape-rendering="geometricPrecision"/><path d="M17 21L22 16L25 19L20 24Z" fill="#e0e000" stroke="#000" stroke-width="1" shape-rendering="geometricPrecision"/></svg><div class="navl" style="top:301px">状态表</div><svg style="left:34px;top:268px" width="34" height="34" viewBox="0 0 34 34" shape-rendering="crispEdges" ><g transform="translate(1,1)"><rect x="0" y="0" width="29" height="23" fill="#000"/><rect x="1" y="1" width="27" height="21" fill="#808080"/><rect x="7" y="1" width="1" height="21" fill="#000"/><rect x="9" y="2" width="18" height="3" fill="#a0a0a4"/><rect x="8" y="6" width="20" height="1" fill="#000"/><rect x="8" y="16" width="20" height="1" fill="#000"/><rect x="9" y="18" width="18" height="3" fill="#a0a0a4"/><rect x="3" y="3" width="1" height="1" fill="#0f0"/><rect x="3" y="6" width="1" height="1" fill="#ffff00"/><rect x="11" y="7.5" width="1" height="1" fill="#0f0"/><rect x="14" y="7.5" width="1" height="1" fill="#0f0"/><rect x="17" y="7.5" width="1" height="1" fill="#0f0"/><rect x="20" y="7.5" width="1" height="1" fill="#0f0"/><rect x="11" y="14" width="1" height="1" fill="#0f0"/><rect x="14" y="14" width="1" height="1" fill="#0f0"/><rect x="1" y="9" width="6" height="1" fill="#000"/><rect x="2" y="11" width="5" height="9" fill="#000"/><rect x="3" y="12" width="3" height="7" fill="#fff"/><rect x="4" y="13" width="1" height="2" fill="#000"/><rect x="4" y="16" width="1" height="2" fill="#000"/><rect x="3" y="15" width="1" height="1" fill="#000"/><rect x="21" y="9" width="7" height="1" fill="#000"/><rect x="21" y="9" width="1" height="5" fill="#000"/><rect x="22" y="10" width="6" height="4" fill="#a0a0a4"/><rect x="21" y="13" width="7" height="1" fill="#000"/></g><path d="M16.5 12.5H26.5L30.5 16.5V30.5H16.5Z" fill="url(#ydot)" stroke="#000" stroke-width="1" /><path d="M26.5 12.5V16.5H30.5" fill="#fff" stroke="#000" stroke-width="1" /><rect x="18" y="19" width="4" height="1" fill="#808080"/><rect x="24" y="19" width="4" height="1" fill="#808080"/><rect x="18" y="22" width="4" height="1" fill="#808080"/><rect x="24" y="22" width="4" height="1" fill="#808080"/><rect x="18" y="25" width="4" height="1" fill="#808080"/><rect x="24" y="25" width="4" height="1" fill="#808080"/><path d="M8.5 26V29.5H13M6 27L8.5 24L11 27ZM12 27L15 29.5L12 32Z" fill="#000" stroke="#000" stroke-width="1" shape-rendering="geometricPrecision"/></svg><div class="navl" style="top:363px">数据块</div><svg style="left:34px;top:330px" width="34" height="34" viewBox="0 0 34 34" shape-rendering="crispEdges" ><g transform="translate(1,1)"><rect x="0" y="0" width="29" height="23" fill="#000"/><rect x="1" y="1" width="27" height="21" fill="#808080"/><rect x="7" y="1" width="1" height="21" fill="#000"/><rect x="9" y="2" width="18" height="3" fill="#a0a0a4"/><rect x="8" y="6" width="20" height="1" fill="#000"/><rect x="8" y="16" width="20" height="1" fill="#000"/><rect x="9" y="18" width="18" height="3" fill="#a0a0a4"/><rect x="3" y="3" width="1" height="1" fill="#0f0"/><rect x="3" y="6" width="1" height="1" fill="#ffff00"/><rect x="11" y="7.5" width="1" height="1" fill="#0f0"/><rect x="14" y="7.5" width="1" height="1" fill="#0f0"/><rect x="17" y="7.5" width="1" height="1" fill="#0f0"/><rect x="20" y="7.5" width="1" height="1" fill="#0f0"/><rect x="11" y="14" width="1" height="1" fill="#0f0"/><rect x="14" y="14" width="1" height="1" fill="#0f0"/><rect x="1" y="9" width="6" height="1" fill="#000"/><rect x="2" y="11" width="5" height="9" fill="#000"/><rect x="3" y="12" width="3" height="7" fill="#fff"/><rect x="4" y="13" width="1" height="2" fill="#000"/><rect x="4" y="16" width="1" height="2" fill="#000"/><rect x="3" y="15" width="1" height="1" fill="#000"/><rect x="21" y="9" width="7" height="1" fill="#000"/><rect x="21" y="9" width="1" height="5" fill="#000"/><rect x="22" y="10" width="6" height="4" fill="#a0a0a4"/><rect x="21" y="13" width="7" height="1" fill="#000"/></g><path d="M16.5 12.5H26.5L30.5 16.5V30.5H16.5Z" fill="#fff" stroke="#000" stroke-width="1" /><path d="M26.5 12.5V16.5H30.5" fill="#fff" stroke="#000" stroke-width="1" /><rect x="18" y="19" width="4" height="1" fill="#0000ff"/><rect x="24" y="19" width="4" height="1" fill="#0000ff"/><rect x="18" y="22" width="4" height="1" fill="#0000ff"/><rect x="24" y="22" width="4" height="1" fill="#0000ff"/><rect x="18" y="25" width="4" height="1" fill="#0000ff"/><rect x="24" y="25" width="4" height="1" fill="#0000ff"/></svg><div class="navl" style="top:425px">系统块</div><svg style="left:34px;top:392px" width="34" height="34" viewBox="0 0 34 34" shape-rendering="crispEdges" ><g transform="translate(1,1)"><rect x="0" y="0" width="29" height="23" fill="#000"/><rect x="1" y="1" width="27" height="21" fill="#808080"/><rect x="7" y="1" width="1" height="21" fill="#000"/><rect x="9" y="2" width="18" height="3" fill="#a0a0a4"/><rect x="8" y="6" width="20" height="1" fill="#000"/><rect x="8" y="16" width="20" height="1" fill="#000"/><rect x="9" y="18" width="18" height="3" fill="#a0a0a4"/><rect x="3" y="3" width="1" height="1" fill="#0f0"/><rect x="3" y="6" width="1" height="1" fill="#ffff00"/><rect x="11" y="7.5" width="1" height="1" fill="#0f0"/><rect x="14" y="7.5" width="1" height="1" fill="#0f0"/><rect x="17" y="7.5" width="1" height="1" fill="#0f0"/><rect x="20" y="7.5" width="1" height="1" fill="#0f0"/><rect x="11" y="14" width="1" height="1" fill="#0f0"/><rect x="14" y="14" width="1" height="1" fill="#0f0"/><rect x="1" y="9" width="6" height="1" fill="#000"/><rect x="2" y="11" width="5" height="9" fill="#000"/><rect x="3" y="12" width="3" height="7" fill="#fff"/><rect x="4" y="13" width="1" height="2" fill="#000"/><rect x="4" y="16" width="1" height="2" fill="#000"/><rect x="3" y="15" width="1" height="1" fill="#000"/><rect x="21" y="9" width="7" height="1" fill="#000"/><rect x="21" y="9" width="1" height="5" fill="#000"/><rect x="22" y="10" width="6" height="4" fill="#a0a0a4"/><rect x="21" y="13" width="7" height="1" fill="#000"/></g><path d="M17 14L20 20L24 17Z" fill="#000" shape-rendering="geometricPrecision"/><path d="M19 18L22 24L27 20Z" fill="#fff" stroke="#000" stroke-width="1" shape-rendering="geometricPrecision"/><path d="M22 24L28 31L32 27L27 20Z" fill="#ffff00" stroke="#000" stroke-width="1" shape-rendering="geometricPrecision"/><path d="M24.5 22L30.5 29" fill="none" stroke="#c00000" stroke-width="1.5" shape-rendering="geometricPrecision"/></svg><div class="navl" style="top:487px">交叉引用</div><svg style="left:34px;top:454px" width="34" height="34" viewBox="0 0 34 34" shape-rendering="crispEdges" ><path d="M2.5 2.5H16.5L20.5 6.5V27.5H2.5Z" fill="url(#ydot)" stroke="#000" stroke-width="1" /><path d="M16.5 2.5V6.5H20.5" fill="#fff" stroke="#000" stroke-width="1" /><path d="M9.5 5.5H27.5L31.5 9.5V31.5H9.5Z" fill="url(#ydot)" stroke="#000" stroke-width="1" /><path d="M27.5 5.5V9.5H31.5" fill="#fff" stroke="#000" stroke-width="1" /><rect x="13" y="11" width="14" height="1" fill="#c0c0c0"/><rect x="13" y="14" width="14" height="1" fill="#c0c0c0"/><rect x="13" y="17" width="14" height="1" fill="#c0c0c0"/><rect x="13" y="20" width="14" height="1" fill="#c0c0c0"/><rect x="13" y="23" width="14" height="1" fill="#c0c0c0"/><rect x="13" y="26" width="14" height="1" fill="#c0c0c0"/><rect x="15" y="9" width="1" height="19" fill="#c0c0c0"/><rect x="19" y="9" width="1" height="19" fill="#c0c0c0"/><rect x="23" y="9" width="1" height="19" fill="#c0c0c0"/><rect x="27" y="9" width="1" height="19" fill="#c0c0c0"/><path d="M4 17L9 13V16H16V13L21 17L16 21V18H9V21Z" fill="#000" shape-rendering="geometricPrecision"/></svg><div class="navl" style="top:549px">通信</div><svg style="left:34px;top:516px" width="34" height="34" viewBox="0 0 34 34" shape-rendering="crispEdges" ><g transform="scale(.93)"><g transform="translate(1,1)"><rect x="0" y="0" width="29" height="23" fill="#000"/><rect x="1" y="1" width="27" height="21" fill="#808080"/><rect x="7" y="1" width="1" height="21" fill="#000"/><rect x="9" y="2" width="18" height="3" fill="#a0a0a4"/><rect x="8" y="6" width="20" height="1" fill="#000"/><rect x="8" y="16" width="20" height="1" fill="#000"/><rect x="9" y="18" width="18" height="3" fill="#a0a0a4"/><rect x="3" y="3" width="1" height="1" fill="#0f0"/><rect x="3" y="6" width="1" height="1" fill="#ffff00"/><rect x="11" y="7.5" width="1" height="1" fill="#0f0"/><rect x="14" y="7.5" width="1" height="1" fill="#0f0"/><rect x="17" y="7.5" width="1" height="1" fill="#0f0"/><rect x="20" y="7.5" width="1" height="1" fill="#0f0"/><rect x="11" y="14" width="1" height="1" fill="#0f0"/><rect x="14" y="14" width="1" height="1" fill="#0f0"/><rect x="1" y="9" width="6" height="1" fill="#000"/><rect x="2" y="11" width="5" height="9" fill="#000"/><rect x="3" y="12" width="3" height="7" fill="#fff"/><rect x="4" y="13" width="1" height="2" fill="#000"/><rect x="4" y="16" width="1" height="2" fill="#000"/><rect x="3" y="15" width="1" height="1" fill="#000"/><rect x="21" y="9" width="7" height="1" fill="#000"/><rect x="21" y="9" width="1" height="5" fill="#000"/><rect x="22" y="10" width="6" height="4" fill="#a0a0a4"/><rect x="21" y="13" width="7" height="1" fill="#000"/></g></g><rect x="5" y="19" width="2" height="8" fill="#000"/><rect x="1" y="26" width="12" height="2" fill="#000"/><rect x="1" y="28" width="12" height="1" fill="#808080"/><rect x="15" y="11" width="14" height="13" fill="#000"/><rect x="16" y="12" width="12" height="11" fill="#fff"/><rect x="18" y="14" width="8" height="6" fill="#008080"/><rect x="19" y="15" width="4" height="1" fill="#0ff"/><path d="M13.5 27.5L16.5 24.5H30.5V28.5L28.5 30.5H13.5Z" fill="#fff" stroke="#000" stroke-width="1" /><rect x="16" y="28" width="1" height="1" fill="#0000ff"/><rect x="20" y="28" width="7" height="1" fill="#000"/><rect x="29" y="22" width="2" height="3" fill="#000"/></svg><div class="navl" style="top:611px">设置 <span style="font-size:11px;letter-spacing:-.2px">PG/PC</span> 接口</div><svg style="left:34px;top:578px" width="34" height="34" viewBox="0 0 34 34" shape-rendering="crispEdges" ><rect x="2" y="0" width="32" height="32" fill="#000"/><rect x="3" y="1" width="30" height="30" fill="#c0c0c0"/><rect x="3" y="1" width="30" height="1" fill="#fff"/><rect x="3" y="1" width="1" height="30" fill="#fff"/><rect x="4" y="30" width="29" height="1" fill="#808080"/><rect x="32" y="2" width="1" height="29" fill="#808080"/><rect x="12" y="4" width="8" height="8" fill="#fff"/><rect x="12" y="4" width="8" height="1" fill="#808080"/><rect x="12" y="4" width="1" height="8" fill="#808080"/><rect x="20" y="4" width="10" height="11" fill="#fff"/><rect x="21" y="5" width="1" height="9" fill="#008080"/><rect x="23" y="5" width="1" height="9" fill="#008080"/><rect x="25" y="5" width="1" height="9" fill="#008080"/><rect x="27" y="5" width="1" height="9" fill="#008080"/><rect x="4" y="11" width="8" height="9" fill="#fff"/><rect x="4" y="11" width="8" height="1" fill="#808080"/><rect x="4" y="11" width="1" height="9" fill="#808080"/><rect x="6" y="17" width="4" height="1" fill="#000"/><rect x="12" y="10" width="10" height="12" fill="#fff"/><rect x="12" y="10" width="10" height="1" fill="#000"/><rect x="12" y="10" width="1" height="12" fill="#000"/><rect x="13" y="12" width="1" height="9" fill="#008080"/><rect x="15" y="12" width="1" height="9" fill="#008080"/><rect x="17" y="12" width="1" height="9" fill="#008080"/><rect x="19" y="12" width="1" height="9" fill="#008080"/><path d="M21 29V24L23 26L27 22L25 20H30V25L28 23L24 27L26 29Z" fill="#000" shape-rendering="geometricPrecision"/></svg>
<div class="a" style="left:105px;top:110px;width:201px;height:582px;background:#fff;border-left:1px solid #000;border-top:1px solid #aca899;box-shadow:inset 0 1px 0 #716f64"></div><div class="a" style="left:308px;top:110px;width:1px;height:582px;background:#fff"></div><div class="a" style="left:100px;top:110px;width:1px;height:582px;background:#fff"></div><div class="dv" style="left:114px;top:126px;height:186px"></div><div class="dv" style="left:133px;top:128px;height:168px"></div><div class="dv" style="left:133px;top:320px;height:296px"></div><div class="dh" style="left:120px;top:120px;width:6px"></div><div class="pm" style="left:110px;top:116px"></div><svg style="left:125px;top:112px" width="16" height="16" viewBox="0 0 16 16" shape-rendering="crispEdges" ><rect x="4" y="0" width="12" height="12" fill="#000"/><rect x="5" y="1" width="10" height="2" fill="#000080"/><rect x="5" y="3" width="10" height="8" fill="#fff"/><rect x="9" y="4" width="2" height="1" fill="#808080"/><rect x="12" y="4" width="2" height="1" fill="#808080"/><path d="M0.5 2.5H4.5L6.5 4.5V10.5H0.5Z" fill="#fff" stroke="#000" stroke-width="1" /><rect x="2" y="5" width="2" height="1" fill="#000080"/><rect x="2" y="7" width="3" height="1" fill="#000080"/><rect x="2" y="9" width="3" height="1" fill="#000080"/><path d="M3.5 4.5H7.5L9.5 6.5V12.5H3.5Z" fill="#fff" stroke="#000" stroke-width="1" /><rect x="5" y="7" width="2" height="1" fill="#000080"/><rect x="5" y="9" width="3" height="1" fill="#000080"/><rect x="5" y="11" width="3" height="1" fill="#000080"/><path d="M6.5 6.5H10.5L12.5 8.5V14.5H6.5Z" fill="#fff" stroke="#000" stroke-width="1" /><rect x="8" y="9" width="2" height="1" fill="#000080"/><rect x="8" y="11" width="3" height="1" fill="#000080"/><rect x="8" y="13" width="3" height="1" fill="#000080"/></svg><div class="tl" style="left:145px;top:112px;background:#ece9d8;padding:0 1px;margin-left:-1px;">项目1</div><div class="dh" style="left:134px;top:136px;width:11px"></div><svg style="left:144px;top:128px" width="16" height="16" viewBox="0 0 16 16" shape-rendering="crispEdges" ><path d="M1.5 .5H12.5V11.5H7.5L5.5 14.5V11.5H1.5Z" fill="url(#ydot2)" stroke="#000" stroke-width="1" /><rect x="13" y="2" width="1" height="10" fill="#808080"/><rect x="3" y="12" width="2" height="1" fill="#808080"/><text x="4" y="10" font-family="Liberation Sans,sans-serif" font-size="11" font-weight="bold" fill="#000080" shape-rendering="geometricPrecision">?</text></svg><div class="tl" style="left:165px;top:128px;text-shadow:1px 0 0 #000;letter-spacing:0px;">新特性</div><div class="dh" style="left:134px;top:152px;width:11px"></div><svg style="left:144px;top:144px" width="16" height="16" viewBox="0 0 16 16" shape-rendering="crispEdges" ><rect x="1" y="3" width="14" height="12" fill="#000"/><rect x="2" y="4" width="11" height="9" fill="#808080"/><rect x="2" y="4" width="11" height="1" fill="#c0c0c0"/><rect x="3" y="7" width="2" height="1" fill="#0f0"/><rect x="3" y="10" width="2" height="1" fill="#0f0"/><rect x="13" y="4" width="1" height="9" fill="#404040"/></svg><div class="tl" style="left:165px;top:144px;font-size:11px;">CPU 221 REL 01.10</div><div class="dh" style="left:139px;top:168px;width:6px"></div><div class="pm p" style="left:129px;top:164px"></div><svg style="left:144px;top:160px" width="16" height="16" viewBox="0 0 16 16" shape-rendering="crispEdges" ><path d="M1.5 13V4.5L3.5 2.5H6.5L8.5 4.5H14" fill="none" stroke="#808080" stroke-width="1" /><path d="M2 5H8L6.5 3H3.5L2 4.5ZM2 5H14V13H2Z" fill="url(#ydot)" /><rect x="14" y="5" width="1" height="9" fill="#808080"/><rect x="15" y="5" width="1" height="10" fill="#000"/><rect x="2" y="13" width="12" height="1" fill="#808080"/><rect x="2" y="14" width="14" height="1" fill="#000"/><rect x="1" y="13" width="1" height="1" fill="#808080"/><g transform="translate(0,-1)"><rect x="2" y="6" width="12" height="7" fill="#000080"/><rect x="5" y="7" width="6" height="5" fill="#c0c0c0"/><rect x="2" y="7" width="1" height="1" fill="#ffff00"/><rect x="2" y="11" width="1" height="1" fill="#ffff00"/><rect x="13" y="7" width="1" height="1" fill="#ffff00"/><rect x="13" y="11" width="1" height="1" fill="#ffff00"/></g></svg><div class="tl" style="left:165px;top:160px;">程序块</div><div class="dh" style="left:139px;top:184px;width:6px"></div><div class="pm p" style="left:129px;top:180px"></div><svg style="left:144px;top:176px" width="16" height="16" viewBox="0 0 16 16" shape-rendering="crispEdges" ><path d="M1.5 13V4.5L3.5 2.5H6.5L8.5 4.5H14" fill="none" stroke="#808080" stroke-width="1" /><path d="M2 5H8L6.5 3H3.5L2 4.5ZM2 5H14V13H2Z" fill="url(#ydot)" /><rect x="14" y="5" width="1" height="9" fill="#808080"/><rect x="15" y="5" width="1" height="10" fill="#000"/><rect x="2" y="13" width="12" height="1" fill="#808080"/><rect x="2" y="14" width="14" height="1" fill="#000"/><rect x="1" y="13" width="1" height="1" fill="#808080"/><g transform="translate(0,-1)"><path d="M3 9.5L5.5 6.5H13.5V12.5H5.5Z" fill="none" stroke="#000" stroke-width="1.6" shape-rendering="geometricPrecision"/><rect x="7" y="9" width="4" height="1" fill="#000"/></g></svg><div class="tl" style="left:165px;top:176px;">符号表</div><div class="dh" style="left:139px;top:200px;width:6px"></div><div class="pm p" style="left:129px;top:196px"></div><svg style="left:144px;top:192px" width="16" height="16" viewBox="0 0 16 16" shape-rendering="crispEdges" ><path d="M1.5 13V4.5L3.5 2.5H6.5L8.5 4.5H14" fill="none" stroke="#808080" stroke-width="1" /><path d="M2 5H8L6.5 3H3.5L2 4.5ZM2 5H14V13H2Z" fill="url(#ydot)" /><rect x="14" y="5" width="1" height="9" fill="#808080"/><rect x="15" y="5" width="1" height="10" fill="#000"/><rect x="2" y="13" width="12" height="1" fill="#808080"/><rect x="2" y="14" width="14" height="1" fill="#000"/><rect x="1" y="13" width="1" height="1" fill="#808080"/><g transform="translate(0,-1)"><rect x="5" y="6" width="6" height="8" fill="#000"/><rect x="7" y="7" width="2" height="2" fill="#fff"/><rect x="7" y="10" width="2" height="3" fill="#fff"/></g></svg><div class="tl" style="left:165px;top:192px;">状态表</div><div class="dh" style="left:139px;top:216px;width:6px"></div><div class="pm p" style="left:129px;top:212px"></div><svg style="left:144px;top:208px" width="16" height="16" viewBox="0 0 16 16" shape-rendering="crispEdges" ><path d="M1.5 13V4.5L3.5 2.5H6.5L8.5 4.5H14" fill="none" stroke="#808080" stroke-width="1" /><path d="M2 5H8L6.5 3H3.5L2 4.5ZM2 5H14V13H2Z" fill="url(#ydot)" /><rect x="14" y="5" width="1" height="9" fill="#808080"/><rect x="15" y="5" width="1" height="10" fill="#000"/><rect x="2" y="13" width="12" height="1" fill="#808080"/><rect x="2" y="14" width="14" height="1" fill="#000"/><rect x="1" y="13" width="1" height="1" fill="#808080"/><g transform="translate(0,-1)"><rect x="2" y="6" width="12" height="7" fill="#000080"/><rect x="5" y="7" width="6" height="5" fill="#c0c0c0"/><rect x="2" y="7" width="1" height="1" fill="#ffff00"/><rect x="2" y="11" width="1" height="1" fill="#ffff00"/><rect x="13" y="7" width="1" height="1" fill="#ffff00"/><rect x="13" y="11" width="1" height="1" fill="#ffff00"/></g></svg><div class="tl" style="left:165px;top:208px;">数据块</div><div class="dh" style="left:139px;top:232px;width:6px"></div><div class="pm p" style="left:129px;top:228px"></div><svg style="left:144px;top:224px" width="16" height="16" viewBox="0 0 16 16" shape-rendering="crispEdges" ><rect x="0" y="0" width="9" height="8" fill="#000"/><rect x="1" y="1" width="7" height="6" fill="#808080"/><rect x="1" y="2" width="1" height="1" fill="#0f0"/><rect x="1" y="4" width="1" height="1" fill="#f00"/><rect x="3" y="2" width="9" height="11" fill="#000"/><rect x="4" y="3" width="7" height="9" fill="#fff"/><rect x="6" y="4" width="10" height="12" fill="#000"/><rect x="7" y="5" width="8" height="10" fill="#fff"/><rect x="8" y="7" width="2" height="1" fill="#0000ff"/><rect x="11" y="7" width="3" height="1" fill="#808080"/><rect x="8" y="9" width="2" height="1" fill="#0000ff"/><rect x="11" y="9" width="3" height="1" fill="#808080"/><rect x="8" y="11" width="6" height="1" fill="#808080"/><rect x="8" y="13" width="6" height="1" fill="#808080"/></svg><div class="tl" style="left:165px;top:224px;">系统块</div><div class="dh" style="left:139px;top:248px;width:6px"></div><div class="pm p" style="left:129px;top:244px"></div><svg style="left:144px;top:240px" width="16" height="16" viewBox="0 0 16 16" shape-rendering="crispEdges" ><rect x="0" y="0" width="10" height="12" fill="#000"/><rect x="1" y="1" width="8" height="10" fill="url(#ydot)"/><rect x="5" y="3" width="11" height="13" fill="#000"/><rect x="6" y="4" width="9" height="11" fill="url(#ydot)"/><rect x="8" y="8" width="6" height="6" fill="#c0c0c0"/><rect x="8" y="10" width="6" height="1" fill="#fff"/><rect x="10" y="8" width="1" height="6" fill="#fff"/><path d="M1 6.5L4 3.5V5.5H8V3.5L11 6.5L8 9.5V7.5H4V9.5Z" fill="#000" shape-rendering="geometricPrecision"/></svg><div class="tl" style="left:165px;top:240px;">交叉引用</div><div class="dh" style="left:139px;top:264px;width:6px"></div><div class="pm p" style="left:129px;top:260px"></div><svg style="left:144px;top:256px" width="16" height="16" viewBox="0 0 16 16" shape-rendering="crispEdges" ><g shape-rendering="geometricPrecision"><path d="M1 13L4 10" fill="none" stroke="#000" stroke-width="2" /><path d="M3 8L8 13L6 15L1 10Z" fill="#808080" stroke="#000" stroke-width="1" /><path d="M5 7L9 11" fill="none" stroke="#808080" stroke-width="3" /><rect x="7" y="1" width="9" height="6" rx="3" transform="rotate(35 11.5 4)" fill="#c0c0c0" stroke="#000"/><circle cx="10" cy="3.5" r="1" fill="#000"/><circle cx="13" cy="5.5" r="1" fill="#000"/></g></svg><div class="tl" style="left:165px;top:256px;">通信</div><div class="dh" style="left:139px;top:280px;width:6px"></div><div class="pm p" style="left:129px;top:276px"></div><svg style="left:144px;top:272px" width="16" height="16" viewBox="0 0 16 16" shape-rendering="crispEdges" ><path d="M1.5 13V4.5L3.5 2.5H6.5L8.5 4.5H14" fill="none" stroke="#808080" stroke-width="1" /><path d="M2 5H8L6.5 3H3.5L2 4.5ZM2 5H14V13H2Z" fill="url(#ydot)" /><rect x="14" y="5" width="1" height="9" fill="#808080"/><rect x="15" y="5" width="1" height="10" fill="#000"/><rect x="2" y="13" width="12" height="1" fill="#808080"/><rect x="2" y="14" width="14" height="1" fill="#000"/><rect x="1" y="13" width="1" height="1" fill="#808080"/><path d="M5 5L12 13" fill="none" stroke="#000" stroke-width="2.2" shape-rendering="geometricPrecision"/><rect x="10" y="3" width="1" height="1" fill="#fff"/><rect x="12" y="2" width="1" height="1" fill="#ffff00"/><rect x="9" y="1" width="1" height="1" fill="#ffff00"/><rect x="12" y="5" width="1" height="1" fill="#fff"/></svg><div class="tl" style="left:165px;top:272px;">向导</div><div class="dh" style="left:139px;top:296px;width:6px"></div><div class="pm p" style="left:129px;top:292px"></div><svg style="left:144px;top:288px" width="16" height="16" viewBox="0 0 16 16" shape-rendering="crispEdges" ><g transform="translate(-1,0)"><path d="M1.5 13V4.5L3.5 2.5H6.5L8.5 4.5H14" fill="none" stroke="#808080" stroke-width="1" /><path d="M2 5H8L6.5 3H3.5L2 4.5ZM2 5H14V13H2Z" fill="url(#ydot)" /><rect x="14" y="5" width="1" height="9" fill="#808080"/><rect x="15" y="5" width="1" height="10" fill="#000"/><rect x="2" y="13" width="12" height="1" fill="#808080"/><rect x="2" y="14" width="14" height="1" fill="#000"/><rect x="1" y="13" width="1" height="1" fill="#808080"/></g><path d="M6 3Q9 0 13 3" fill="none" stroke="#000080" stroke-width="2" shape-rendering="geometricPrecision"/><rect x="9" y="3" width="2" height="3" fill="#808080"/><rect x="8" y="6" width="4" height="10" fill="#e00000"/><rect x="8" y="6" width="1" height="10" fill="#800000"/><rect x="10" y="7" width="1" height="8" fill="#ff8080"/></svg><div class="tl" style="left:165px;top:288px;">工具</div><div class="dh" style="left:120px;top:312px;width:6px"></div><div class="pm" style="left:110px;top:308px"></div><svg style="left:125px;top:304px" width="16" height="16" viewBox="0 0 16 16" shape-rendering="crispEdges" ><path d="M1.5 13V4.5L3.5 2.5H6.5L8.5 4.5H14" fill="none" stroke="#808080" stroke-width="1" /><path d="M2 5H8L6.5 3H3.5L2 4.5ZM2 5H14V13H2Z" fill="url(#ydot)" /><rect x="14" y="5" width="1" height="9" fill="#808080"/><rect x="15" y="5" width="1" height="10" fill="#000"/><rect x="2" y="13" width="12" height="1" fill="#808080"/><rect x="2" y="14" width="14" height="1" fill="#000"/><rect x="1" y="13" width="1" height="1" fill="#808080"/><g transform="translate(0,-1)"><rect x="7" y="6" width="3" height="4" fill="#000"/><path d="M4.5 9.5H12.5L8.5 13.5Z" fill="#000" /></g></svg><div class="tl" style="left:145px;top:304px;">指令</div><div class="dh" style="left:134px;top:328px;width:11px"></div><svg style="left:144px;top:320px" width="16" height="16" viewBox="0 0 16 16" shape-rendering="crispEdges" ><path d="M1.5 13V4.5L3.5 2.5H6.5L8.5 4.5H14" fill="none" stroke="#808080" stroke-width="1" /><path d="M2 5H8L6.5 3H3.5L2 4.5ZM2 5H14V13H2Z" fill="url(#ydot)" /><rect x="14" y="5" width="1" height="9" fill="#808080"/><rect x="15" y="5" width="1" height="10" fill="#000"/><rect x="2" y="13" width="12" height="1" fill="#808080"/><rect x="2" y="14" width="14" height="1" fill="#000"/><rect x="1" y="13" width="1" height="1" fill="#808080"/><g transform="translate(0,-1)"><rect x="8" y="6" width="1" height="7" fill="#0000ff"/><rect x="5" y="9" width="7" height="1" fill="#0000ff"/><rect x="6" y="7" width="1" height="1" fill="#0000ff"/><rect x="10" y="7" width="1" height="1" fill="#0000ff"/><rect x="6" y="11" width="1" height="1" fill="#0000ff"/><rect x="10" y="11" width="1" height="1" fill="#0000ff"/><rect x="7" y="8" width="3" height="3" fill="#0000ff"/></g></svg><div class="tl" style="left:165px;top:320px;">收藏夹</div><div class="dh" style="left:139px;top:344px;width:6px"></div><div class="pm p" style="left:129px;top:340px"></div><svg style="left:144px;top:336px" width="16" height="16" viewBox="0 0 16 16" shape-rendering="crispEdges" ><path d="M1.5 13V4.5L3.5 2.5H6.5L8.5 4.5H14" fill="none" stroke="#808080" stroke-width="1" /><path d="M2 5H8L6.5 3H3.5L2 4.5ZM2 5H14V13H2Z" fill="url(#ydot)" /><rect x="14" y="5" width="1" height="9" fill="#808080"/><rect x="15" y="5" width="1" height="10" fill="#000"/><rect x="2" y="13" width="12" height="1" fill="#808080"/><rect x="2" y="14" width="14" height="1" fill="#000"/><rect x="1" y="13" width="1" height="1" fill="#808080"/><g transform="translate(0,-1)"><rect x="3" y="9" width="4" height="2" fill="#000"/><rect x="7" y="6" width="2" height="7" fill="#000"/><rect x="11" y="6" width="2" height="7" fill="#000"/></g></svg><div class="tl" style="left:165px;top:336px;">位逻辑</div><div class="dh" style="left:139px;top:360px;width:6px"></div><div class="pm p" style="left:129px;top:356px"></div><svg style="left:144px;top:352px" width="16" height="16" viewBox="0 0 16 16" shape-rendering="crispEdges" ><path d="M1.5 13V4.5L3.5 2.5H6.5L8.5 4.5H14" fill="none" stroke="#808080" stroke-width="1" /><path d="M2 5H8L6.5 3H3.5L2 4.5ZM2 5H14V13H2Z" fill="url(#ydot)" /><rect x="14" y="5" width="1" height="9" fill="#808080"/><rect x="15" y="5" width="1" height="10" fill="#000"/><rect x="2" y="13" width="12" height="1" fill="#808080"/><rect x="2" y="14" width="14" height="1" fill="#000"/><rect x="1" y="13" width="1" height="1" fill="#808080"/><g transform="translate(0,-1)"><circle cx="8.5" cy="9.5" r="3.5" fill="#c0c0c0" stroke="#000" shape-rendering="geometricPrecision"/><path d="M8.5 7.5V9.5L10.5 11" fill="none" stroke="#000" stroke-width="1" shape-rendering="geometricPrecision"/></g></svg><div class="tl" style="left:165px;top:352px;">时钟</div><div class="dh" style="left:139px;top:376px;width:6px"></div><div class="pm p" style="left:129px;top:372px"></div><svg style="left:144px;top:368px" width="16" height="16" viewBox="0 0 16 16" shape-rendering="crispEdges" ><path d="M1.5 13V4.5L3.5 2.5H6.5L8.5 4.5H14" fill="none" stroke="#808080" stroke-width="1" /><path d="M2 5H8L6.5 3H3.5L2 4.5ZM2 5H14V13H2Z" fill="url(#ydot)" /><rect x="14" y="5" width="1" height="9" fill="#808080"/><rect x="15" y="5" width="1" height="10" fill="#000"/><rect x="2" y="13" width="12" height="1" fill="#808080"/><rect x="2" y="14" width="14" height="1" fill="#000"/><rect x="1" y="13" width="1" height="1" fill="#808080"/><g transform="translate(0,-1)"><path d="M10 5.5L5.5 10H8.5L6.5 14L12 9H9Z" fill="#000" shape-rendering="geometricPrecision"/></g></svg><div class="tl" style="left:165px;top:368px;">通信</div><div class="dh" style="left:139px;top:392px;width:6px"></div><div class="pm p" style="left:129px;top:388px"></div><svg style="left:144px;top:384px" width="16" height="16" viewBox="0 0 16 16" shape-rendering="crispEdges" ><path d="M1.5 13V4.5L3.5 2.5H6.5L8.5 4.5H14" fill="none" stroke="#808080" stroke-width="1" /><path d="M2 5H8L6.5 3H3.5L2 4.5ZM2 5H14V13H2Z" fill="url(#ydot)" /><rect x="14" y="5" width="1" height="9" fill="#808080"/><rect x="15" y="5" width="1" height="10" fill="#000"/><rect x="2" y="13" width="12" height="1" fill="#808080"/><rect x="2" y="14" width="14" height="1" fill="#000"/><rect x="1" y="13" width="1" height="1" fill="#808080"/><g transform="translate(0,-1)"><path d="M11 6L6 9.5L11 13" fill="none" stroke="#000" stroke-width="2" shape-rendering="geometricPrecision"/></g></svg><div class="tl" style="left:165px;top:384px;">比较</div><div class="dh" style="left:139px;top:408px;width:6px"></div><div class="pm p" style="left:129px;top:404px"></div><svg style="left:144px;top:400px" width="16" height="16" viewBox="0 0 16 16" shape-rendering="crispEdges" ><path d="M1.5 13V4.5L3.5 2.5H6.5L8.5 4.5H14" fill="none" stroke="#808080" stroke-width="1" /><path d="M2 5H8L6.5 3H3.5L2 4.5ZM2 5H14V13H2Z" fill="url(#ydot)" /><rect x="14" y="5" width="1" height="9" fill="#808080"/><rect x="15" y="5" width="1" height="10" fill="#000"/><rect x="2" y="13" width="12" height="1" fill="#808080"/><rect x="2" y="14" width="14" height="1" fill="#000"/><rect x="1" y="13" width="1" height="1" fill="#808080"/><g transform="translate(0,-1)"><path d="M3.5 11.5L6 7.5L8.5 11.5Z" fill="none" stroke="#000" stroke-width="1.2" shape-rendering="geometricPrecision"/><path d="M9 9.5H14L11.5 13Z" fill="none" stroke="#000" stroke-width="1.2" shape-rendering="geometricPrecision"/></g></svg><div class="tl" style="left:165px;top:400px;">转换</div><div class="dh" style="left:139px;top:424px;width:6px"></div><div class="pm p" style="left:129px;top:420px"></div><svg style="left:144px;top:416px" width="16" height="16" viewBox="0 0 16 16" shape-rendering="crispEdges" ><path d="M1.5 13V4.5L3.5 2.5H6.5L8.5 4.5H14" fill="none" stroke="#808080" stroke-width="1" /><path d="M2 5H8L6.5 3H3.5L2 4.5ZM2 5H14V13H2Z" fill="url(#ydot)" /><rect x="14" y="5" width="1" height="9" fill="#808080"/><rect x="15" y="5" width="1" height="10" fill="#000"/><rect x="2" y="13" width="12" height="1" fill="#808080"/><rect x="2" y="14" width="14" height="1" fill="#000"/><rect x="1" y="13" width="1" height="1" fill="#808080"/><g transform="translate(0,-1)"><text x="3.5" y="13" font-family="Liberation Sans,sans-serif" font-size="9" font-weight="bold" fill="#000" shape-rendering="geometricPrecision">+1</text></g></svg><div class="tl" style="left:165px;top:416px;">计数器</div><div class="dh" style="left:139px;top:440px;width:6px"></div><div class="pm p" style="left:129px;top:436px"></div><svg style="left:144px;top:432px" width="16" height="16" viewBox="0 0 16 16" shape-rendering="crispEdges" ><path d="M1.5 13V4.5L3.5 2.5H6.5L8.5 4.5H14" fill="none" stroke="#808080" stroke-width="1" /><path d="M2 5H8L6.5 3H3.5L2 4.5ZM2 5H14V13H2Z" fill="url(#ydot)" /><rect x="14" y="5" width="1" height="9" fill="#808080"/><rect x="15" y="5" width="1" height="10" fill="#000"/><rect x="2" y="13" width="12" height="1" fill="#808080"/><rect x="2" y="14" width="14" height="1" fill="#000"/><rect x="1" y="13" width="1" height="1" fill="#808080"/><g transform="translate(0,-1)"><text x="3" y="13" font-family="Liberation Sans,sans-serif" font-size="8" font-weight="bold" fill="#000" shape-rendering="geometricPrecision" textLength="11" lengthAdjust="spacingAndGlyphs">±R</text></g></svg><div class="tl" style="left:165px;top:432px;">浮点数计算</div><div class="dh" style="left:139px;top:456px;width:6px"></div><div class="pm p" style="left:129px;top:452px"></div><svg style="left:144px;top:448px" width="16" height="16" viewBox="0 0 16 16" shape-rendering="crispEdges" ><path d="M1.5 13V4.5L3.5 2.5H6.5L8.5 4.5H14" fill="none" stroke="#808080" stroke-width="1" /><path d="M2 5H8L6.5 3H3.5L2 4.5ZM2 5H14V13H2Z" fill="url(#ydot)" /><rect x="14" y="5" width="1" height="9" fill="#808080"/><rect x="15" y="5" width="1" height="10" fill="#000"/><rect x="2" y="13" width="12" height="1" fill="#808080"/><rect x="2" y="14" width="14" height="1" fill="#000"/><rect x="1" y="13" width="1" height="1" fill="#808080"/><g transform="translate(0,-1)"><text x="3" y="13" font-family="Liberation Sans,sans-serif" font-size="8" font-weight="bold" fill="#000" shape-rendering="geometricPrecision" textLength="10" lengthAdjust="spacingAndGlyphs">±I</text></g></svg><div class="tl" style="left:165px;top:448px;">整数计算</div><div class="dh" style="left:139px;top:472px;width:6px"></div><div class="pm p" style="left:129px;top:468px"></div><svg style="left:144px;top:464px" width="16" height="16" viewBox="0 0 16 16" shape-rendering="crispEdges" ><path d="M1.5 13V4.5L3.5 2.5H6.5L8.5 4.5H14" fill="none" stroke="#808080" stroke-width="1" /><path d="M2 5H8L6.5 3H3.5L2 4.5ZM2 5H14V13H2Z" fill="url(#ydot)" /><rect x="14" y="5" width="1" height="9" fill="#808080"/><rect x="15" y="5" width="1" height="10" fill="#000"/><rect x="2" y="13" width="12" height="1" fill="#808080"/><rect x="2" y="14" width="14" height="1" fill="#000"/><rect x="1" y="13" width="1" height="1" fill="#808080"/><g transform="translate(0,-1)"><rect x="4" y="6" width="2" height="7" fill="#000"/><rect x="7" y="6" width="2" height="7" fill="#000"/><rect x="10" y="6" width="2" height="7" fill="#000"/></g></svg><div class="tl" style="left:165px;top:464px;">中断</div><div class="dh" style="left:139px;top:488px;width:6px"></div><div class="pm p" style="left:129px;top:484px"></div><svg style="left:144px;top:480px" width="16" height="16" viewBox="0 0 16 16" shape-rendering="crispEdges" ><path d="M1.5 13V4.5L3.5 2.5H6.5L8.5 4.5H14" fill="none" stroke="#808080" stroke-width="1" /><path d="M2 5H8L6.5 3H3.5L2 4.5ZM2 5H14V13H2Z" fill="url(#ydot)" /><rect x="14" y="5" width="1" height="9" fill="#808080"/><rect x="15" y="5" width="1" height="10" fill="#000"/><rect x="2" y="13" width="12" height="1" fill="#808080"/><rect x="2" y="14" width="14" height="1" fill="#000"/><rect x="1" y="13" width="1" height="1" fill="#808080"/><g transform="translate(0,-1)"><rect x="5" y="6" width="2" height="2" fill="#000"/><rect x="5" y="9" width="2" height="2" fill="#000"/><rect x="5" y="12" width="2" height="1" fill="#000"/><circle cx="10.5" cy="7.5" r="1.5" fill="none" stroke="#000" shape-rendering="geometricPrecision"/><circle cx="10.5" cy="11.5" r="1.5" fill="none" stroke="#000" shape-rendering="geometricPrecision"/></g></svg><div class="tl" style="left:165px;top:480px;">逻辑运算</div><div class="dh" style="left:139px;top:504px;width:6px"></div><div class="pm p" style="left:129px;top:500px"></div><svg style="left:144px;top:496px" width="16" height="16" viewBox="0 0 16 16" shape-rendering="crispEdges" ><path d="M1.5 13V4.5L3.5 2.5H6.5L8.5 4.5H14" fill="none" stroke="#808080" stroke-width="1" /><path d="M2 5H8L6.5 3H3.5L2 4.5ZM2 5H14V13H2Z" fill="url(#ydot)" /><rect x="14" y="5" width="1" height="9" fill="#808080"/><rect x="15" y="5" width="1" height="10" fill="#000"/><rect x="2" y="13" width="12" height="1" fill="#808080"/><rect x="2" y="14" width="14" height="1" fill="#000"/><rect x="1" y="13" width="1" height="1" fill="#808080"/><g transform="translate(0,-1)"><path d="M3.5 12Q6 6 9 8T13 10" fill="none" stroke="#000" stroke-width="1.5" shape-rendering="geometricPrecision"/><rect x="11" y="9" width="3" height="3" fill="#000"/></g></svg><div class="tl" style="left:165px;top:496px;">传送</div><div class="dh" style="left:139px;top:520px;width:6px"></div><div class="pm p" style="left:129px;top:516px"></div><svg style="left:144px;top:512px" width="16" height="16" viewBox="0 0 16 16" shape-rendering="crispEdges" ><path d="M1.5 13V4.5L3.5 2.5H6.5L8.5 4.5H14" fill="none" stroke="#808080" stroke-width="1" /><path d="M2 5H8L6.5 3H3.5L2 4.5ZM2 5H14V13H2Z" fill="url(#ydot)" /><rect x="14" y="5" width="1" height="9" fill="#808080"/><rect x="15" y="5" width="1" height="10" fill="#000"/><rect x="2" y="13" width="12" height="1" fill="#808080"/><rect x="2" y="14" width="14" height="1" fill="#000"/><rect x="1" y="13" width="1" height="1" fill="#808080"/><g transform="translate(0,-1)"><path d="M3 7.5H6.5V12M9.5 12V7.5H13" fill="none" stroke="#000" stroke-width="1.6" /><path d="M4.5 10H8.5L6.5 13Z" fill="#000" /><path d="M10.5 9V5.5L13.5 7.5Z" fill="#000" /></g></svg><div class="tl" style="left:165px;top:512px;">程序控制</div><div class="dh" style="left:139px;top:536px;width:6px"></div><div class="pm p" style="left:129px;top:532px"></div><svg style="left:144px;top:528px" width="16" height="16" viewBox="0 0 16 16" shape-rendering="crispEdges" ><path d="M1.5 13V4.5L3.5 2.5H6.5L8.5 4.5H14" fill="none" stroke="#808080" stroke-width="1" /><path d="M2 5H8L6.5 3H3.5L2 4.5ZM2 5H14V13H2Z" fill="url(#ydot)" /><rect x="14" y="5" width="1" height="9" fill="#808080"/><rect x="15" y="5" width="1" height="10" fill="#000"/><rect x="2" y="13" width="12" height="1" fill="#808080"/><rect x="2" y="14" width="14" height="1" fill="#000"/><rect x="1" y="13" width="1" height="1" fill="#808080"/><g transform="translate(0,-1)"><rect x="4" y="6" width="1" height="1" fill="#000"/><rect x="6" y="6" width="1" height="1" fill="#000"/><rect x="8" y="6" width="1" height="1" fill="#000"/><rect x="10" y="6" width="1" height="1" fill="#000"/><rect x="12" y="6" width="1" height="1" fill="#000"/><rect x="4" y="8" width="1" height="1" fill="#000"/><rect x="6" y="8" width="1" height="1" fill="#000"/><rect x="8" y="8" width="1" height="1" fill="#000"/><rect x="10" y="8" width="1" height="1" fill="#000"/><rect x="12" y="8" width="1" height="1" fill="#000"/><rect x="4" y="11" width="9" height="1" fill="#000"/><path d="M3 11.5L5.5 9.5V13.5ZM14 11.5L11.5 9.5V13.5Z" fill="#000" /></g></svg><div class="tl" style="left:165px;top:528px;">移位/循环</div><div class="dh" style="left:139px;top:552px;width:6px"></div><div class="pm p" style="left:129px;top:548px"></div><svg style="left:144px;top:544px" width="16" height="16" viewBox="0 0 16 16" shape-rendering="crispEdges" ><path d="M1.5 13V4.5L3.5 2.5H6.5L8.5 4.5H14" fill="none" stroke="#808080" stroke-width="1" /><path d="M2 5H8L6.5 3H3.5L2 4.5ZM2 5H14V13H2Z" fill="url(#ydot)" /><rect x="14" y="5" width="1" height="9" fill="#808080"/><rect x="15" y="5" width="1" height="10" fill="#000"/><rect x="2" y="13" width="12" height="1" fill="#808080"/><rect x="2" y="14" width="14" height="1" fill="#000"/><rect x="1" y="13" width="1" height="1" fill="#808080"/><g transform="translate(0,-1)"><text x="3" y="13" font-family="Liberation Sans,sans-serif" font-size="8" font-weight="bold" fill="#000" shape-rendering="geometricPrecision" textLength="11" lengthAdjust="spacingAndGlyphs">AB</text></g></svg><div class="tl" style="left:165px;top:544px;">字符串</div><div class="dh" style="left:139px;top:568px;width:6px"></div><div class="pm p" style="left:129px;top:564px"></div><svg style="left:144px;top:560px" width="16" height="16" viewBox="0 0 16 16" shape-rendering="crispEdges" ><path d="M1.5 13V4.5L3.5 2.5H6.5L8.5 4.5H14" fill="none" stroke="#808080" stroke-width="1" /><path d="M2 5H8L6.5 3H3.5L2 4.5ZM2 5H14V13H2Z" fill="url(#ydot)" /><rect x="14" y="5" width="1" height="9" fill="#808080"/><rect x="15" y="5" width="1" height="10" fill="#000"/><rect x="2" y="13" width="12" height="1" fill="#808080"/><rect x="2" y="14" width="14" height="1" fill="#000"/><rect x="1" y="13" width="1" height="1" fill="#808080"/><g transform="translate(0,-1)"><rect x="4" y="6" width="10" height="8" fill="#000"/><rect x="5" y="7" width="2" height="1" fill="#fff"/><rect x="5" y="9" width="2" height="1" fill="#fff"/><rect x="5" y="11" width="2" height="1" fill="#fff"/><rect x="8" y="7" width="2" height="1" fill="#fff"/><rect x="8" y="9" width="2" height="1" fill="#fff"/><rect x="8" y="11" width="2" height="1" fill="#fff"/><rect x="11" y="7" width="2" height="1" fill="#fff"/><rect x="11" y="9" width="2" height="1" fill="#fff"/><rect x="11" y="11" width="2" height="1" fill="#fff"/></g></svg><div class="tl" style="left:165px;top:560px;">表</div><div class="dh" style="left:139px;top:584px;width:6px"></div><div class="pm p" style="left:129px;top:580px"></div><svg style="left:144px;top:576px" width="16" height="16" viewBox="0 0 16 16" shape-rendering="crispEdges" ><path d="M1.5 13V4.5L3.5 2.5H6.5L8.5 4.5H14" fill="none" stroke="#808080" stroke-width="1" /><path d="M2 5H8L6.5 3H3.5L2 4.5ZM2 5H14V13H2Z" fill="url(#ydot)" /><rect x="14" y="5" width="1" height="9" fill="#808080"/><rect x="15" y="5" width="1" height="10" fill="#000"/><rect x="2" y="13" width="12" height="1" fill="#808080"/><rect x="2" y="14" width="14" height="1" fill="#000"/><rect x="1" y="13" width="1" height="1" fill="#808080"/><g transform="translate(0,-1)"><circle cx="8.5" cy="10" r="3.8" fill="#fff" stroke="#000" stroke-width="1.3" shape-rendering="geometricPrecision"/><path d="M8.5 10L10.5 12" fill="none" stroke="#f00" stroke-width="1" shape-rendering="geometricPrecision"/><rect x="7" y="4" width="3" height="2" fill="#000"/></g></svg><div class="tl" style="left:165px;top:576px;">定时器</div><div class="dh" style="left:134px;top:600px;width:11px"></div><svg style="left:144px;top:592px" width="16" height="16" viewBox="0 0 16 16" shape-rendering="crispEdges" ><g shape-rendering="geometricPrecision"><path d="M0 14L3 7L4 14Z" fill="#a000a0" stroke="#000" stroke-width="0.6" /><path d="M3 14L4.5 4Q5.5 2 7 3.5V14Z" fill="#00e0e0" stroke="#000" stroke-width="0.8" /><path d="M7 14L8.5 5L11 4V14Z" fill="#ffff00" stroke="#000" stroke-width="0.8" /><path d="M10.5 14L11 2.5L14 .5L15 1.5V12.5L13 14Z" fill="#00d000" stroke="#000" stroke-width="0.8" /></g></svg><div class="tl" style="left:165px;top:592px;">库</div><div class="dh" style="left:139px;top:616px;width:6px"></div><div class="pm p" style="left:129px;top:612px"></div><svg style="left:144px;top:608px" width="16" height="16" viewBox="0 0 16 16" shape-rendering="crispEdges" ><path d="M1.5 13V4.5L3.5 2.5H6.5L8.5 4.5H14" fill="none" stroke="#808080" stroke-width="1" /><path d="M2 5H8L6.5 3H3.5L2 4.5ZM2 5H14V13H2Z" fill="url(#ydot)" /><rect x="14" y="5" width="1" height="9" fill="#808080"/><rect x="15" y="5" width="1" height="10" fill="#000"/><rect x="2" y="13" width="12" height="1" fill="#808080"/><rect x="2" y="14" width="14" height="1" fill="#000"/><rect x="1" y="13" width="1" height="1" fill="#808080"/><g transform="translate(0,-1)"><rect x="2" y="6" width="12" height="7" fill="#000080"/><rect x="5" y="7" width="6" height="5" fill="#c0c0c0"/><rect x="2" y="7" width="1" height="1" fill="#ffff00"/><rect x="2" y="11" width="1" height="1" fill="#ffff00"/><rect x="13" y="7" width="1" height="1" fill="#ffff00"/><rect x="13" y="11" width="1" height="1" fill="#ffff00"/></g></svg><div class="tl" style="left:165px;top:608px;">调用子程序</div>
<div class="a" style="left:312px;top:109px;width:966px;height:583px;background:#808080;border-left:1px solid #716f64;border-top:1px solid #716f64"></div><div class="a" style="left:1278px;top:109px;width:1px;height:583px;background:#fff"></div><div class="a" style="left:316px;top:112px;width:960px;height:580px;border-radius:7px 7px 0 0;background:#0831d9;overflow:hidden"><div class="a" style="left:0;top:0;width:960px;height:30px;background:linear-gradient(#0a46e0 0,#0a46e0 .6px,#2f88ff 1.5px,#3d95ff 2.5px,#3d95ff 3.5px,#0470fc 4.5px,#0363ee 6px,#0058e6 8px,#0058e6 13px,#015ceb 17px,#0368fa 21px,#0469fd 26px,#0160f5 27.5px,#0048dc 28.5px,#002fc4 30px)"></div><div class="a" style="left:0;top:30px;width:960px;height:550px;background:linear-gradient(90deg,#0019cf 0,#0831d9 1px,#166aee 2.5px,#0855dd 4px,#0046d5 956px,#0855dd 957px,#001ea0 959px,#001ea0 960px)"></div></div><div class="a" style="left:320px;top:142px;width:952px;height:546px;background:#ece9d8"></div><div class="a" style="left:316px;top:688px;width:960px;height:4px;background:linear-gradient(#0855dd 0,#0046d5 2px,#001ea0 4px)"></div><svg style="left:323px;top:121px" width="16" height="16" viewBox="0 0 16 16" shape-rendering="crispEdges" ><rect x="0" y="0" width="13" height="12" fill="#000"/><rect x="1" y="1" width="11" height="10" fill="#fff"/><rect x="2" y="3" width="3" height="1" fill="#808080"/><rect x="2" y="6" width="5" height="1" fill="#808080"/><rect x="6" y="3" width="3" height="1" fill="#808080"/><rect x="3" y="2" width="1" height="1" fill="#ffff00"/><rect x="6" y="5" width="1" height="1" fill="#ffff00"/><rect x="2" y="8" width="1" height="1" fill="#ffff00"/><rect x="9" y="2" width="1" height="1" fill="#ffff00"/><rect x="5" y="9" width="1" height="1" fill="#ffff00"/><path d="M7 2L12 5V9L9 10Z" fill="#fff" stroke="#000" stroke-width="1" shape-rendering="geometricPrecision"/><path d="M9.5 8.5L13 13" fill="none" stroke="#808080" stroke-width="2" shape-rendering="geometricPrecision"/><rect x="11" y="12" width="3" height="3" fill="#c00000"/><rect x="12" y="13" width="1" height="1" fill="#ffff00"/></svg><div class="a" style="left:343px;top:121px;color:#fff;font:bold 13px 'Liberation Mono',monospace;letter-spacing:.2px;line-height:16px;white-space:nowrap;text-shadow:1px 1px 0 #0a246a">SIMATIC LAD</div><div class="wb" style="left:1203px;top:118px"><svg style="left:4px;top:12px" width="7" height="3" viewBox="0 0 7 3" shape-rendering="crispEdges" ><rect x="0" y="0" width="7" height="3" fill="#fff"/></svg></div><div class="wb" style="left:1226px;top:118px"><svg style="left:4px;top:4px" width="11" height="11" viewBox="0 0 11 11" shape-rendering="crispEdges" ><rect x=".5" y=".5" width="10" height="10" fill="none" stroke="#fff"/><rect x="0" y="0" width="11" height="3" fill="#fff"/></svg></div><div class="wb x" style="left:1249px;top:118px"><svg style="left:4px;top:4px" width="11" height="11" viewBox="0 0 11 11" shape-rendering="crispEdges" shape-rendering="geometricPrecision"><path d="M1 1l9 9M10 1l-9 9" stroke="#fff" stroke-width="2.2" stroke-linecap="square"/></svg></div><div class="a" style="left:320px;top:147px;width:21px;height:1px;background:#fff"></div><div class="a" style="left:341px;top:147px;width:605px;height:15px;background:#fff;border:1px solid #000;border-right:1px solid #aca899;border-bottom:1px solid #aca899"></div><div class="a" style="left:946px;top:146px;width:95px;height:16px;border:1px solid #aca899"></div><div class="a" style="left:320px;top:162px;width:952px;height:1px;background:#fff"></div><div class="a" style="left:320px;top:148px;font-size:11px;line-height:13px">2</div><div class="a" style="left:332px;top:153px;width:1px;height:2px;background:#000"></div><div class="a" style="left:351px;top:148px;width:21px;text-align:center;font-size:11px;line-height:13px">3</div><div class="a" style="left:351px;top:153px;width:1px;height:2px;background:#000"></div><div class="a" style="left:370px;top:153px;width:1px;height:2px;background:#000"></div><div class="a" style="left:380px;top:152px;width:1px;height:4px;background:#000"></div><div class="a" style="left:389px;top:148px;width:21px;text-align:center;font-size:11px;line-height:13px">4</div><div class="a" style="left:389px;top:153px;width:1px;height:2px;background:#000"></div><div class="a" style="left:408px;top:153px;width:1px;height:2px;background:#000"></div><div class="a" style="left:418px;top:152px;width:1px;height:4px;background:#000"></div><div class="a" style="left:426px;top:148px;width:21px;text-align:center;font-size:11px;line-height:13px">5</div><div class="a" style="left:426px;top:153px;width:1px;height:2px;background:#000"></div><div class="a" style="left:445px;top:153px;width:1px;height:2px;background:#000"></div><div class="a" style="left:455px;top:152px;width:1px;height:4px;background:#000"></div><div class="a" style="left:464px;top:148px;width:21px;text-align:center;font-size:11px;line-height:13px">6</div><div class="a" style="left:464px;top:153px;width:1px;height:2px;background:#000"></div><div class="a" style="left:483px;top:153px;width:1px;height:2px;background:#000"></div><div class="a" style="left:493px;top:152px;width:1px;height:4px;background:#000"></div><div class="a" style="left:502px;top:148px;width:21px;text-align:center;font-size:11px;line-height:13px">7</div><div class="a" style="left:502px;top:153px;width:1px;height:2px;background:#000"></div><div class="a" style="left:521px;top:153px;width:1px;height:2px;background:#000"></div><div class="a" style="left:531px;top:152px;width:1px;height:4px;background:#000"></div><div class="a" style="left:540px;top:148px;width:21px;text-align:center;font-size:11px;line-height:13px">8</div><div class="a" style="left:540px;top:153px;width:1px;height:2px;background:#000"></div><div class="a" style="left:559px;top:153px;width:1px;height:2px;background:#000"></div><div class="a" style="left:569px;top:152px;width:1px;height:4px;background:#000"></div><div class="a" style="left:578px;top:148px;width:21px;text-align:center;font-size:11px;line-height:13px">9</div><div class="a" style="left:578px;top:153px;width:1px;height:2px;background:#000"></div><div class="a" style="left:597px;top:153px;width:1px;height:2px;background:#000"></div><div class="a" style="left:607px;top:152px;width:1px;height:4px;background:#000"></div><div class="a" style="left:616px;top:148px;width:21px;text-align:center;font-size:11px;line-height:13px">10</div><div class="a" style="left:616px;top:153px;width:1px;height:2px;background:#000"></div><div class="a" style="left:635px;top:153px;width:1px;height:2px;background:#000"></div><div class="a" style="left:645px;top:152px;width:1px;height:4px;background:#000"></div><div class="a" style="left:654px;top:148px;width:21px;text-align:center;font-size:11px;line-height:13px">11</div><div class="a" style="left:654px;top:153px;width:1px;height:2px;background:#000"></div><div class="a" style="left:673px;top:153px;width:1px;height:2px;background:#000"></div><div class="a" style="left:683px;top:152px;width:1px;height:4px;background:#000"></div><div class="a" style="left:692px;top:148px;width:21px;text-align:center;font-size:11px;line-height:13px">12</div><div class="a" style="left:692px;top:153px;width:1px;height:2px;background:#000"></div><div class="a" style="left:711px;top:153px;width:1px;height:2px;background:#000"></div><div class="a" style="left:721px;top:152px;width:1px;height:4px;background:#000"></div><div class="a" style="left:729px;top:148px;width:21px;text-align:center;font-size:11px;line-height:13px">13</div><div class="a" style="left:729px;top:153px;width:1px;height:2px;background:#000"></div><div class="a" style="left:748px;top:153px;width:1px;height:2px;background:#000"></div><div class="a" style="left:758px;top:152px;width:1px;height:4px;background:#000"></div><div class="a" style="left:767px;top:148px;width:21px;text-align:center;font-size:11px;line-height:13px">14</div><div class="a" style="left:767px;top:153px;width:1px;height:2px;background:#000"></div><div class="a" style="left:786px;top:153px;width:1px;height:2px;background:#000"></div><div class="a" style="left:796px;top:152px;width:1px;height:4px;background:#000"></div><div class="a" style="left:805px;top:148px;width:21px;text-align:center;font-size:11px;line-height:13px">15</div><div class="a" style="left:805px;top:153px;width:1px;height:2px;background:#000"></div><div class="a" style="left:824px;top:153px;width:1px;height:2px;background:#000"></div><div class="a" style="left:834px;top:152px;width:1px;height:4px;background:#000"></div><div class="a" style="left:843px;top:148px;width:21px;text-align:center;font-size:11px;line-height:13px">16</div><div class="a" style="left:843px;top:153px;width:1px;height:2px;background:#000"></div><div class="a" style="left:862px;top:153px;width:1px;height:2px;background:#000"></div><div class="a" style="left:872px;top:152px;width:1px;height:4px;background:#000"></div><div class="a" style="left:881px;top:148px;width:21px;text-align:center;font-size:11px;line-height:13px">17</div><div class="a" style="left:881px;top:153px;width:1px;height:2px;background:#000"></div><div class="a" style="left:900px;top:153px;width:1px;height:2px;background:#000"></div><div class="a" style="left:910px;top:152px;width:1px;height:4px;background:#000"></div><div class="a" style="left:918px;top:148px;width:21px;text-align:center;font-size:11px;line-height:13px">18</div><div class="a" style="left:918px;top:153px;width:1px;height:2px;background:#000"></div><div class="a" style="left:937px;top:153px;width:1px;height:2px;background:#000"></div><div class="a" style="left:956px;top:148px;width:21px;text-align:center;font-size:11px;line-height:13px">19</div><div class="a" style="left:956px;top:153px;width:1px;height:2px;background:#000"></div><div class="a" style="left:975px;top:153px;width:1px;height:2px;background:#000"></div><div class="a" style="left:985px;top:152px;width:1px;height:4px;background:#000"></div><div class="a" style="left:994px;top:148px;width:21px;text-align:center;font-size:11px;line-height:13px">20</div><div class="a" style="left:994px;top:153px;width:1px;height:2px;background:#000"></div><div class="a" style="left:1013px;top:153px;width:1px;height:2px;background:#000"></div><div class="a" style="left:1023px;top:152px;width:1px;height:4px;background:#000"></div><div class="a" style="left:1033px;top:153px;width:1px;height:2px;background:#000"></div><div class="a" style="left:321px;top:166px;width:949px;height:101px;border:1px solid #000;background:#ece9d8"></div><div class="a hatchg" style="left:322px;top:167px;width:19px;height:99px"></div><div class="a" style="left:341px;top:167px;width:1px;height:99px;background:#000"></div><div class="hc" style="left:342px;top:167px;width:40px"></div><div class="hc" style="left:382px;top:167px;width:125px">符号</div><div class="hc" style="left:507px;top:167px;width:75px">变量类型</div><div class="hc" style="left:582px;top:167px;width:75px">数据类型</div><div class="hc" style="left:657px;top:167px;width:290px">注释</div><div class="hc" style="left:342px;top:183px;width:40px"></div><div class="gc" style="left:382px;top:183px;width:125px"></div><div class="gc" style="left:507px;top:183px;width:75px;background:#f2efe2">TEMP</div><div class="gc" style="left:582px;top:183px;width:75px"></div><div class="gc" style="left:657px;top:183px;width:290px"></div><div class="hc" style="left:342px;top:199px;width:40px"></div><div class="gc" style="left:382px;top:199px;width:125px"></div><div class="gc" style="left:507px;top:199px;width:75px;background:#f2efe2">TEMP</div><div class="gc" style="left:582px;top:199px;width:75px"></div><div class="gc" style="left:657px;top:199px;width:290px"></div><div class="hc" style="left:342px;top:215px;width:40px"></div><div class="gc" style="left:382px;top:215px;width:125px"></div><div class="gc" style="left:507px;top:215px;width:75px;background:#f2efe2">TEMP</div><div class="gc" style="left:582px;top:215px;width:75px"></div><div class="gc" style="left:657px;top:215px;width:290px"></div><div class="hc" style="left:342px;top:231px;width:40px"></div><div class="gc" style="left:382px;top:231px;width:125px"></div><div class="gc" style="left:507px;top:231px;width:75px;background:#f2efe2">TEMP</div><div class="gc" style="left:582px;top:231px;width:75px"></div><div class="gc" style="left:657px;top:231px;width:290px"></div><div class="a" style="left:320px;top:267px;width:952px;height:2px;background:#fff"></div><div class="a" style="left:321px;top:273px;width:949px;height:414px;border-top:1px solid #000;border-left:1px solid #000;background:#fff"></div><div class="a hatchg" style="left:322px;top:274px;width:19px;height:397px"></div><div class="a" style="left:341px;top:274px;width:2px;height:396px;background:#000"></div><div class="a" style="left:343px;top:341px;width:1px;height:54px;background:#000"></div><div class="cm" style="top:279px">程序注释</div><div class="nw" style="top:300px">网络<span class="m" style="text-shadow:none;font-weight:bold"> 1</span></div><div class="a" style="left:410px;top:300px;color:#008000;white-space:nowrap">网络标题</div><div class="cm" style="top:319px">网络注释</div><div class="a" style="left:343px;top:341px;width:101px;height:54px;border:1px solid #000;border-left:0"></div><svg style="left:343px;top:357px" width="52" height="24" viewBox="0 0 52 24" shape-rendering="crispEdges" shape-rendering="geometricPrecision"><path d="M0 12H50M40 2L50 12L40 22M50 1V22" fill="none" stroke="#000" stroke-width="2"/></svg><div class="nw" style="top:428px">网络<span class="m" style="text-shadow:none;font-weight:bold"> 2</span></div><div class="cm" style="top:447px"></div><svg style="left:343px;top:485px" width="52" height="24" viewBox="0 0 52 24" shape-rendering="crispEdges" shape-rendering="geometricPrecision"><path d="M0 12H50M40 2L50 12L40 22M50 1V22" fill="none" stroke="#000" stroke-width="2"/></svg><div class="nw" style="top:556px">网络<span class="m" style="text-shadow:none;font-weight:bold"> 3</span></div><div class="cm" style="top:575px"></div><svg style="left:343px;top:613px" width="52" height="24" viewBox="0 0 52 24" shape-rendering="crispEdges" shape-rendering="geometricPrecision"><path d="M0 12H50M40 2L50 12L40 22M50 1V22" fill="none" stroke="#000" stroke-width="2"/></svg><div class="a hatch" style="left:1254px;top:274px;width:16px;height:397px"></div><div class="sb" style="left:1254px;top:274px;width:16px;height:17px"></div><svg style="left:1258px;top:280px" width="7" height="4" viewBox="0 0 7 4" shape-rendering="crispEdges" ><path d="M0 4L3.5 0.5L7 4z" fill="#000"/></svg><div class="sb" style="left:1254px;top:291px;width:16px;height:33px"></div><div class="sb" style="left:1254px;top:654px;width:16px;height:17px"></div><svg style="left:1258px;top:661px" width="7" height="4" viewBox="0 0 7 4" shape-rendering="crispEdges" ><path d="M0 0L3.5 3.5L7 0z" fill="#000"/></svg><div class="a" style="left:321px;top:671px;width:949px;height:16px;background:#ece9d8"></div><div class="a" style="left:321px;top:670px;width:478px;height:17px;background:#d4d0c8;border-top:1px solid #000"></div><div class="sb" style="left:322px;top:671px;width:16px;height:16px;border-color:#fff #404040 #404040 #fff"></div><svg style="left:327px;top:675px" width="4" height="7" viewBox="0 0 4 7" shape-rendering="crispEdges" ><path d="M4 0L0.5 3.5L4 7z" fill="#505050"/></svg><div class="sb" style="left:338px;top:671px;width:17px;height:16px;border-color:#fff #404040 #404040 #fff"></div><svg style="left:345px;top:675px" width="4" height="7" viewBox="0 0 4 7" shape-rendering="crispEdges" ><path d="M0 0L3.5 3.5L0 7z" fill="#505050"/></svg><svg style="left:355px;top:671px" width="170" height="16" viewBox="0 0 170 16" shape-rendering="crispEdges" shape-rendering="geometricPrecision"><path d="M56 0H113L108 15H61zM109 0H162L157 15H114z" fill="#ece9d8"/><path d="M61 15.5H108L113 0M57.5 8L61 15.5M114 15.5H157L162 0M110.5 8L114 15.5" fill="none" stroke="#000" stroke-width="1.1"/><path d="M1 -1V0L8 16H55L60 0V-1z" fill="#fff"/><path d="M1 0L8 16M55 16L60 0" fill="none" stroke="#000" stroke-width="1.4"/></svg><div class="a" style="left:366px;top:672px;text-shadow:1px 0 0 #000;white-space:nowrap">主程序</div><div class="a" style="left:423px;top:672px;font-size:11px;white-space:nowrap">SBR_0</div><div class="a" style="left:476px;top:672px;font-size:11px;white-space:nowrap">INT_0</div><div class="a" style="left:797px;top:671px;width:3px;height:16px;background:#ece9d8;border-left:1px solid #fff;border-right:1px solid #716f64"></div><div class="a hatch" style="left:800px;top:671px;width:454px;height:16px"></div><div class="sb" style="left:800px;top:671px;width:17px;height:16px"></div><svg style="left:806px;top:675px" width="4" height="7" viewBox="0 0 4 7" shape-rendering="crispEdges" ><path d="M4 0L0.5 3.5L4 7z" fill="#000"/></svg><div class="sb" style="left:817px;top:671px;width:120px;height:16px"></div><div class="sb" style="left:1237px;top:671px;width:17px;height:16px"></div><svg style="left:1244px;top:675px" width="4" height="7" viewBox="0 0 4 7" shape-rendering="crispEdges" ><path d="M0 0L3.5 3.5L0 7z" fill="#000"/></svg><svg style="left:1257px;top:674px" width="12" height="12" viewBox="0 0 12 12" shape-rendering="crispEdges" shape-rendering="geometricPrecision"><path d="M11 1L1 11M11 5L5 11M11 9L9 11" stroke="#aca899" stroke-width="1"/><path d="M12 1L2 11M12 5L6 11" stroke="#fff" stroke-width="1"/></svg>
<div class="a" style="left:0;top:697px;width:1279px;height:2px;background:#000;border-top:1px solid #404040"></div>
<div class="a" style="left:4px;top:702px;width:1273px;height:44px;background:#fff;border:1px solid;border-color:#aca899 #fff #fff #aca899;box-shadow:inset 1px 1px 0 #716f64,inset -1px -1px 0 #ece9d8"></div>
<div class="a" style="left:0;top:749px;width:1279px;height:1px;background:#cbc7b5"></div>
<div class="a" style="left:2px;top:754px;white-space:nowrap">就绪</div>
<div class="sp" style="left:1033px;width:104px">网络<span class="m"> 1</span></div>
<div class="sp" style="left:1141px;width:105px">行<span class="m"> 1, </span>列<span class="m"> 1</span></div>
<div class="sp" style="left:1249px;width:30px"><span class="m">INS</span></div>
</body></html>
